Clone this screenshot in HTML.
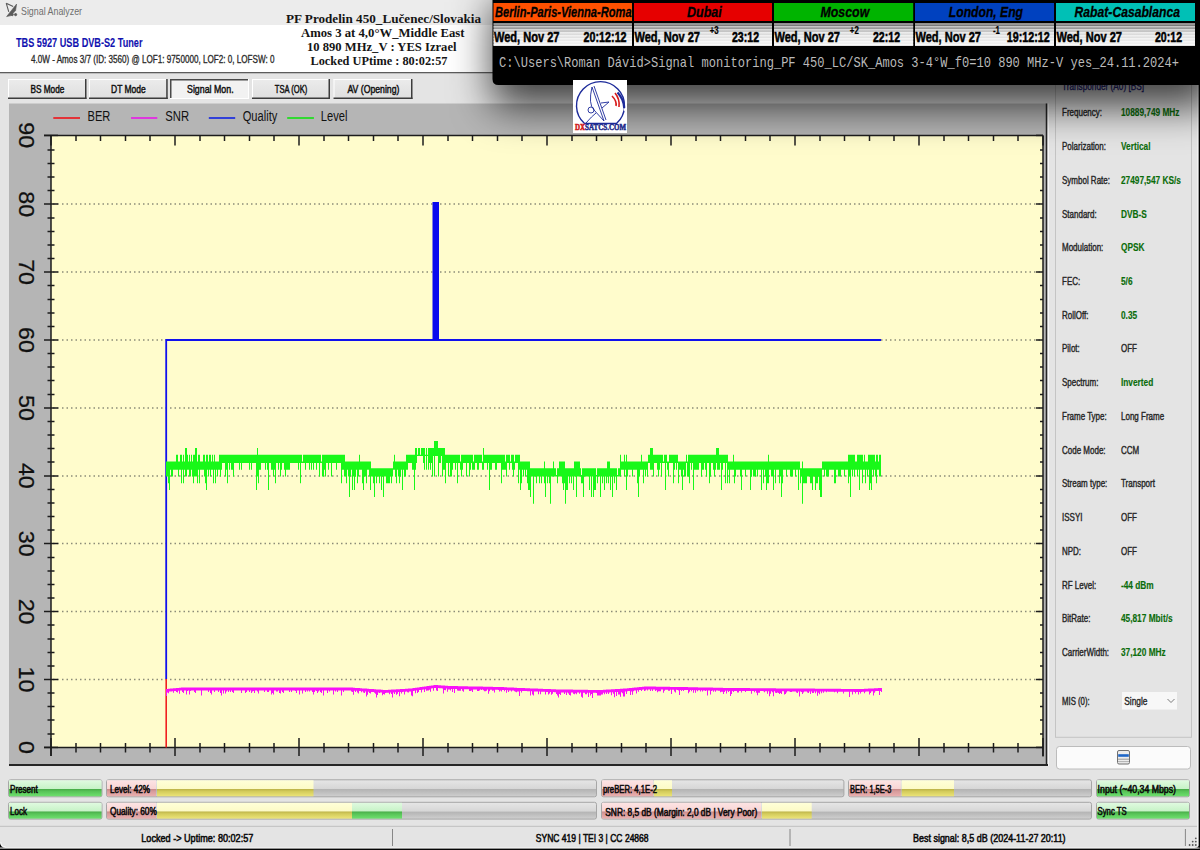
<!DOCTYPE html><html><head><meta charset="utf-8"><title>Signal Analyzer</title><style>html,body{margin:0;padding:0;width:1200px;height:850px;overflow:hidden;background:#e4e4e4}svg{display:block}</style></head><body>
<svg width="1200" height="850" viewBox="0 0 1200 850" shape-rendering="auto">
<defs>
<linearGradient id="gGreen" x1="0" y1="0" x2="0" y2="1">
<stop offset="0" stop-color="#e0fae0"/><stop offset="0.54" stop-color="#c6f2c6"/><stop offset="0.56" stop-color="#48ac48"/><stop offset="0.7" stop-color="#58c458"/><stop offset="1" stop-color="#6ee06e"/></linearGradient>
<linearGradient id="gPink" x1="0" y1="0" x2="0" y2="1">
<stop offset="0" stop-color="#fde4e4"/><stop offset="0.54" stop-color="#f8d4d4"/><stop offset="0.56" stop-color="#c88a8a"/><stop offset="0.7" stop-color="#d89c9c"/><stop offset="1" stop-color="#eab0b0"/></linearGradient>
<linearGradient id="gYel" x1="0" y1="0" x2="0" y2="1">
<stop offset="0" stop-color="#ffffd8"/><stop offset="0.54" stop-color="#fcfac6"/><stop offset="0.56" stop-color="#beb44a"/><stop offset="0.7" stop-color="#d4cc5c"/><stop offset="1" stop-color="#ece478"/></linearGradient>
<linearGradient id="gGray" x1="0" y1="0" x2="0" y2="1">
<stop offset="0" stop-color="#e6e6e6"/><stop offset="0.54" stop-color="#d6d6d6"/><stop offset="0.56" stop-color="#b4b4b4"/><stop offset="0.7" stop-color="#bcbcbc"/><stop offset="1" stop-color="#d0d0d0"/></linearGradient>
<linearGradient id="gDate" x1="0" y1="0" x2="0" y2="1">
<stop offset="0" stop-color="#6a6a6a"/><stop offset="0.18" stop-color="#888888"/><stop offset="0.42" stop-color="#d8d8d8"/><stop offset="1" stop-color="#f4f4f4"/></linearGradient>
<pattern id="pStripe" x="0" y="23" width="4" height="3" patternUnits="userSpaceOnUse"><rect width="4" height="1.5" fill="#ffffff" fill-opacity="0.55"/></pattern>
<linearGradient id="gBtn" x1="0" y1="0" x2="0" y2="1">
<stop offset="0" stop-color="#ececec"/><stop offset="1" stop-color="#dedede"/></linearGradient>
<filter id="fShadow" x="-20%" y="-100%" width="140%" height="300%"><feGaussianBlur stdDeviation="20"/></filter>
</defs>
<rect x="0" y="0" width="1200" height="850" fill="#e4e4e4"/>
<rect x="0" y="0" width="1200" height="25" fill="#ececec"/>
<rect x="0" y="25" width="1200" height="47" fill="#ffffff"/>
<line x1="0" y1="72.5" x2="1200" y2="72.5" stroke="#5c5c5c" stroke-width="1"/>
<line x1="0" y1="73.5" x2="1200" y2="73.5" stroke="#bdbdbd" stroke-width="1"/>
<g fill="#5a5a5a" stroke="#5a5a5a" stroke-linejoin="round"><path d="M6.6 16.6 L16.6 4 L15.6 10.5 L11 15.6 Z" stroke-width="0.6"/><path d="M6.2 3.2 L13.2 6.6 M6.2 3.2 L8.8 11.8" stroke-width="1.1" fill="none"/><circle cx="12.2" cy="14.6" r="1.1"/><circle cx="15.6" cy="14.6" r="1.1"/></g>
<text x="21" y="14.7" font-family="Liberation Sans" font-size="11" font-weight="normal" fill="#6e6e6e" text-anchor="start" textLength="61" lengthAdjust="spacingAndGlyphs">Signal Analyzer</text>
<text x="16" y="47" font-family="Liberation Sans" font-size="12" font-weight="bold" fill="#1212b0" stroke="#1212b0" stroke-width="0.1" text-anchor="start" textLength="126.5" lengthAdjust="spacingAndGlyphs">TBS 5927 USB DVB-S2 Tuner</text>
<text x="31" y="62.5" font-family="Liberation Sans" font-size="10" font-weight="normal" fill="#2a2a2a" stroke="#2a2a2a" stroke-width="0.3" text-anchor="start" textLength="243.5" lengthAdjust="spacingAndGlyphs">4.0W - Amos 3/7 (ID: 3560) @ LOF1: 9750000, LOF2: 0, LOFSW: 0</text>
<text x="286" y="23" font-family="Liberation Serif" font-size="12.5" font-weight="bold" fill="#151515" text-anchor="start" textLength="195" lengthAdjust="spacingAndGlyphs">PF Prodelin 450_Lučenec/Slovakia</text>
<text x="301" y="37" font-family="Liberation Serif" font-size="12.5" font-weight="bold" fill="#151515" text-anchor="start" textLength="163.5" lengthAdjust="spacingAndGlyphs">Amos 3 at 4,0°W_Middle East</text>
<text x="307" y="50.9" font-family="Liberation Serif" font-size="12.5" font-weight="bold" fill="#151515" text-anchor="start" textLength="149.5" lengthAdjust="spacingAndGlyphs">10 890 MHz_V : YES Izrael</text>
<text x="310.5" y="64.5" font-family="Liberation Serif" font-size="12.5" font-weight="bold" fill="#151515" text-anchor="start" textLength="137" lengthAdjust="spacingAndGlyphs">Locked UPtime : 80:02:57</text>
<rect x="8" y="79" width="78.5" height="20" fill="url(#gBtn)"/>
<line x1="8" y1="79.5" x2="86.5" y2="79.5" stroke="#ffffff" stroke-width="1"/>
<line x1="8.5" y1="79" x2="8.5" y2="99" stroke="#ffffff" stroke-width="1"/>
<line x1="8" y1="98.25" x2="86.5" y2="98.25" stroke="#3c3c3c" stroke-width="1.5"/>
<line x1="85.75" y1="79" x2="85.75" y2="99" stroke="#3c3c3c" stroke-width="1.5"/>
<text x="30.4" y="93.1" font-family="Liberation Sans" font-size="10.5" font-weight="normal" fill="#111" stroke="#111" stroke-width="0.45" text-anchor="start" textLength="34" lengthAdjust="spacingAndGlyphs">BS Mode</text>
<rect x="89" y="79" width="78.69999999999999" height="20" fill="url(#gBtn)"/>
<line x1="89" y1="79.5" x2="167.7" y2="79.5" stroke="#ffffff" stroke-width="1"/>
<line x1="89.5" y1="79" x2="89.5" y2="99" stroke="#ffffff" stroke-width="1"/>
<line x1="89" y1="98.25" x2="167.7" y2="98.25" stroke="#3c3c3c" stroke-width="1.5"/>
<line x1="166.95" y1="79" x2="166.95" y2="99" stroke="#3c3c3c" stroke-width="1.5"/>
<text x="111" y="93.1" font-family="Liberation Sans" font-size="10.5" font-weight="normal" fill="#111" stroke="#111" stroke-width="0.45" text-anchor="start" textLength="34.8" lengthAdjust="spacingAndGlyphs">DT Mode</text>
<rect x="170" y="79" width="79" height="20" fill="#f2f2f2"/>
<line x1="170" y1="79.75" x2="249" y2="79.75" stroke="#4a4a4a" stroke-width="1.5"/>
<line x1="170.75" y1="79" x2="170.75" y2="99" stroke="#4a4a4a" stroke-width="1.5"/>
<line x1="170" y1="98.5" x2="249" y2="98.5" stroke="#ffffff" stroke-width="1"/>
<line x1="248.5" y1="79" x2="248.5" y2="99" stroke="#ffffff" stroke-width="1"/>
<text x="187" y="93.1" font-family="Liberation Sans" font-size="10.5" font-weight="normal" fill="#111" stroke="#111" stroke-width="0.45" text-anchor="start" textLength="46.6" lengthAdjust="spacingAndGlyphs">Signal Mon.</text>
<rect x="252" y="79" width="78" height="20" fill="url(#gBtn)"/>
<line x1="252" y1="79.5" x2="330" y2="79.5" stroke="#ffffff" stroke-width="1"/>
<line x1="252.5" y1="79" x2="252.5" y2="99" stroke="#ffffff" stroke-width="1"/>
<line x1="252" y1="98.25" x2="330" y2="98.25" stroke="#3c3c3c" stroke-width="1.5"/>
<line x1="329.25" y1="79" x2="329.25" y2="99" stroke="#3c3c3c" stroke-width="1.5"/>
<text x="274.8" y="93.1" font-family="Liberation Sans" font-size="10.5" font-weight="normal" fill="#111" stroke="#111" stroke-width="0.45" text-anchor="start" textLength="32.5" lengthAdjust="spacingAndGlyphs">TSA (OK)</text>
<rect x="333.5" y="79" width="79.0" height="20" fill="url(#gBtn)"/>
<line x1="333.5" y1="79.5" x2="412.5" y2="79.5" stroke="#ffffff" stroke-width="1"/>
<line x1="334.0" y1="79" x2="334.0" y2="99" stroke="#ffffff" stroke-width="1"/>
<line x1="333.5" y1="98.25" x2="412.5" y2="98.25" stroke="#3c3c3c" stroke-width="1.5"/>
<line x1="411.75" y1="79" x2="411.75" y2="99" stroke="#3c3c3c" stroke-width="1.5"/>
<text x="347.4" y="93.1" font-family="Liberation Sans" font-size="10.5" font-weight="normal" fill="#111" stroke="#111" stroke-width="0.45" text-anchor="start" textLength="52" lengthAdjust="spacingAndGlyphs">AV (Opening)</text>
<rect x="9" y="103.5" width="1038" height="661.5" fill="#b5b5b5"/>
<line x1="9" y1="764.9" x2="1048" y2="764.9" stroke="#262626" stroke-width="2"/>
<line x1="1046.5" y1="103.5" x2="1046.5" y2="766" stroke="#262626" stroke-width="1.5"/>
<line x1="1048.5" y1="103.5" x2="1048.5" y2="766" stroke="#f8f8f8" stroke-width="1"/>
<rect x="51" y="135.4" width="992" height="612.0" fill="#fffccc"/>
<line x1="53" y1="679.5" x2="1041" y2="679.5" stroke="#8c8c78" stroke-width="1.4" stroke-dasharray="1.5 3"/>
<line x1="53" y1="611.5" x2="1041" y2="611.5" stroke="#8c8c78" stroke-width="1.4" stroke-dasharray="1.5 3"/>
<line x1="53" y1="543.5" x2="1041" y2="543.5" stroke="#8c8c78" stroke-width="1.4" stroke-dasharray="1.5 3"/>
<line x1="53" y1="476.0" x2="1041" y2="476.0" stroke="#8c8c78" stroke-width="1.4" stroke-dasharray="1.5 3"/>
<line x1="53" y1="408.0" x2="1041" y2="408.0" stroke="#8c8c78" stroke-width="1.4" stroke-dasharray="1.5 3"/>
<line x1="53" y1="340.0" x2="1041" y2="340.0" stroke="#8c8c78" stroke-width="1.4" stroke-dasharray="1.5 3"/>
<line x1="53" y1="272.0" x2="1041" y2="272.0" stroke="#8c8c78" stroke-width="1.4" stroke-dasharray="1.5 3"/>
<line x1="53" y1="204.0" x2="1041" y2="204.0" stroke="#8c8c78" stroke-width="1.4" stroke-dasharray="1.5 3"/>
<line x1="44" y1="135.4" x2="1043" y2="135.4" stroke="#1c1c1c" stroke-width="1.5"/>
<line x1="44" y1="747.4" x2="1043" y2="747.4" stroke="#1c1c1c" stroke-width="1.5"/>
<line x1="51" y1="135.4" x2="51" y2="756" stroke="#1c1c1c" stroke-width="1.5"/>
<line x1="1043" y1="135.4" x2="1043" y2="756.5" stroke="#1c1c1c" stroke-width="1.5"/>
<line x1="51.0" y1="738" x2="51.0" y2="756" stroke="#1c1c1c" stroke-width="1.5"/>
<line x1="51.0" y1="135.4" x2="51.0" y2="145.5" stroke="#1c1c1c" stroke-width="1.5"/>
<line x1="76.0" y1="743" x2="76.0" y2="752.5" stroke="#1c1c1c" stroke-width="1.5"/>
<line x1="76.0" y1="135.4" x2="76.0" y2="141" stroke="#1c1c1c" stroke-width="1.5"/>
<line x1="100.5" y1="743" x2="100.5" y2="752.5" stroke="#1c1c1c" stroke-width="1.5"/>
<line x1="100.5" y1="135.4" x2="100.5" y2="141" stroke="#1c1c1c" stroke-width="1.5"/>
<line x1="125.5" y1="743" x2="125.5" y2="752.5" stroke="#1c1c1c" stroke-width="1.5"/>
<line x1="125.5" y1="135.4" x2="125.5" y2="141" stroke="#1c1c1c" stroke-width="1.5"/>
<line x1="150.0" y1="743" x2="150.0" y2="752.5" stroke="#1c1c1c" stroke-width="1.5"/>
<line x1="150.0" y1="135.4" x2="150.0" y2="141" stroke="#1c1c1c" stroke-width="1.5"/>
<line x1="175.0" y1="738" x2="175.0" y2="756" stroke="#1c1c1c" stroke-width="1.5"/>
<line x1="175.0" y1="135.4" x2="175.0" y2="145.5" stroke="#1c1c1c" stroke-width="1.5"/>
<line x1="200.0" y1="743" x2="200.0" y2="752.5" stroke="#1c1c1c" stroke-width="1.5"/>
<line x1="200.0" y1="135.4" x2="200.0" y2="141" stroke="#1c1c1c" stroke-width="1.5"/>
<line x1="224.5" y1="743" x2="224.5" y2="752.5" stroke="#1c1c1c" stroke-width="1.5"/>
<line x1="224.5" y1="135.4" x2="224.5" y2="141" stroke="#1c1c1c" stroke-width="1.5"/>
<line x1="249.5" y1="743" x2="249.5" y2="752.5" stroke="#1c1c1c" stroke-width="1.5"/>
<line x1="249.5" y1="135.4" x2="249.5" y2="141" stroke="#1c1c1c" stroke-width="1.5"/>
<line x1="274.0" y1="743" x2="274.0" y2="752.5" stroke="#1c1c1c" stroke-width="1.5"/>
<line x1="274.0" y1="135.4" x2="274.0" y2="141" stroke="#1c1c1c" stroke-width="1.5"/>
<line x1="299.0" y1="738" x2="299.0" y2="756" stroke="#1c1c1c" stroke-width="1.5"/>
<line x1="299.0" y1="135.4" x2="299.0" y2="145.5" stroke="#1c1c1c" stroke-width="1.5"/>
<line x1="324.0" y1="743" x2="324.0" y2="752.5" stroke="#1c1c1c" stroke-width="1.5"/>
<line x1="324.0" y1="135.4" x2="324.0" y2="141" stroke="#1c1c1c" stroke-width="1.5"/>
<line x1="348.5" y1="743" x2="348.5" y2="752.5" stroke="#1c1c1c" stroke-width="1.5"/>
<line x1="348.5" y1="135.4" x2="348.5" y2="141" stroke="#1c1c1c" stroke-width="1.5"/>
<line x1="373.5" y1="743" x2="373.5" y2="752.5" stroke="#1c1c1c" stroke-width="1.5"/>
<line x1="373.5" y1="135.4" x2="373.5" y2="141" stroke="#1c1c1c" stroke-width="1.5"/>
<line x1="398.0" y1="743" x2="398.0" y2="752.5" stroke="#1c1c1c" stroke-width="1.5"/>
<line x1="398.0" y1="135.4" x2="398.0" y2="141" stroke="#1c1c1c" stroke-width="1.5"/>
<line x1="423.0" y1="738" x2="423.0" y2="756" stroke="#1c1c1c" stroke-width="1.5"/>
<line x1="423.0" y1="135.4" x2="423.0" y2="145.5" stroke="#1c1c1c" stroke-width="1.5"/>
<line x1="448.0" y1="743" x2="448.0" y2="752.5" stroke="#1c1c1c" stroke-width="1.5"/>
<line x1="448.0" y1="135.4" x2="448.0" y2="141" stroke="#1c1c1c" stroke-width="1.5"/>
<line x1="472.5" y1="743" x2="472.5" y2="752.5" stroke="#1c1c1c" stroke-width="1.5"/>
<line x1="472.5" y1="135.4" x2="472.5" y2="141" stroke="#1c1c1c" stroke-width="1.5"/>
<line x1="497.5" y1="743" x2="497.5" y2="752.5" stroke="#1c1c1c" stroke-width="1.5"/>
<line x1="497.5" y1="135.4" x2="497.5" y2="141" stroke="#1c1c1c" stroke-width="1.5"/>
<line x1="522.0" y1="743" x2="522.0" y2="752.5" stroke="#1c1c1c" stroke-width="1.5"/>
<line x1="522.0" y1="135.4" x2="522.0" y2="141" stroke="#1c1c1c" stroke-width="1.5"/>
<line x1="547.0" y1="738" x2="547.0" y2="756" stroke="#1c1c1c" stroke-width="1.5"/>
<line x1="547.0" y1="135.4" x2="547.0" y2="145.5" stroke="#1c1c1c" stroke-width="1.5"/>
<line x1="572.0" y1="743" x2="572.0" y2="752.5" stroke="#1c1c1c" stroke-width="1.5"/>
<line x1="572.0" y1="135.4" x2="572.0" y2="141" stroke="#1c1c1c" stroke-width="1.5"/>
<line x1="596.5" y1="743" x2="596.5" y2="752.5" stroke="#1c1c1c" stroke-width="1.5"/>
<line x1="596.5" y1="135.4" x2="596.5" y2="141" stroke="#1c1c1c" stroke-width="1.5"/>
<line x1="621.5" y1="743" x2="621.5" y2="752.5" stroke="#1c1c1c" stroke-width="1.5"/>
<line x1="621.5" y1="135.4" x2="621.5" y2="141" stroke="#1c1c1c" stroke-width="1.5"/>
<line x1="646.0" y1="743" x2="646.0" y2="752.5" stroke="#1c1c1c" stroke-width="1.5"/>
<line x1="646.0" y1="135.4" x2="646.0" y2="141" stroke="#1c1c1c" stroke-width="1.5"/>
<line x1="671.0" y1="738" x2="671.0" y2="756" stroke="#1c1c1c" stroke-width="1.5"/>
<line x1="671.0" y1="135.4" x2="671.0" y2="145.5" stroke="#1c1c1c" stroke-width="1.5"/>
<line x1="696.0" y1="743" x2="696.0" y2="752.5" stroke="#1c1c1c" stroke-width="1.5"/>
<line x1="696.0" y1="135.4" x2="696.0" y2="141" stroke="#1c1c1c" stroke-width="1.5"/>
<line x1="720.5" y1="743" x2="720.5" y2="752.5" stroke="#1c1c1c" stroke-width="1.5"/>
<line x1="720.5" y1="135.4" x2="720.5" y2="141" stroke="#1c1c1c" stroke-width="1.5"/>
<line x1="745.5" y1="743" x2="745.5" y2="752.5" stroke="#1c1c1c" stroke-width="1.5"/>
<line x1="745.5" y1="135.4" x2="745.5" y2="141" stroke="#1c1c1c" stroke-width="1.5"/>
<line x1="770.0" y1="743" x2="770.0" y2="752.5" stroke="#1c1c1c" stroke-width="1.5"/>
<line x1="770.0" y1="135.4" x2="770.0" y2="141" stroke="#1c1c1c" stroke-width="1.5"/>
<line x1="795.0" y1="738" x2="795.0" y2="756" stroke="#1c1c1c" stroke-width="1.5"/>
<line x1="795.0" y1="135.4" x2="795.0" y2="145.5" stroke="#1c1c1c" stroke-width="1.5"/>
<line x1="820.0" y1="743" x2="820.0" y2="752.5" stroke="#1c1c1c" stroke-width="1.5"/>
<line x1="820.0" y1="135.4" x2="820.0" y2="141" stroke="#1c1c1c" stroke-width="1.5"/>
<line x1="844.5" y1="743" x2="844.5" y2="752.5" stroke="#1c1c1c" stroke-width="1.5"/>
<line x1="844.5" y1="135.4" x2="844.5" y2="141" stroke="#1c1c1c" stroke-width="1.5"/>
<line x1="869.5" y1="743" x2="869.5" y2="752.5" stroke="#1c1c1c" stroke-width="1.5"/>
<line x1="869.5" y1="135.4" x2="869.5" y2="141" stroke="#1c1c1c" stroke-width="1.5"/>
<line x1="894.0" y1="743" x2="894.0" y2="752.5" stroke="#1c1c1c" stroke-width="1.5"/>
<line x1="894.0" y1="135.4" x2="894.0" y2="141" stroke="#1c1c1c" stroke-width="1.5"/>
<line x1="919.0" y1="738" x2="919.0" y2="756" stroke="#1c1c1c" stroke-width="1.5"/>
<line x1="919.0" y1="135.4" x2="919.0" y2="145.5" stroke="#1c1c1c" stroke-width="1.5"/>
<line x1="944.0" y1="743" x2="944.0" y2="752.5" stroke="#1c1c1c" stroke-width="1.5"/>
<line x1="944.0" y1="135.4" x2="944.0" y2="141" stroke="#1c1c1c" stroke-width="1.5"/>
<line x1="968.5" y1="743" x2="968.5" y2="752.5" stroke="#1c1c1c" stroke-width="1.5"/>
<line x1="968.5" y1="135.4" x2="968.5" y2="141" stroke="#1c1c1c" stroke-width="1.5"/>
<line x1="993.5" y1="743" x2="993.5" y2="752.5" stroke="#1c1c1c" stroke-width="1.5"/>
<line x1="993.5" y1="135.4" x2="993.5" y2="141" stroke="#1c1c1c" stroke-width="1.5"/>
<line x1="1018.0" y1="743" x2="1018.0" y2="752.5" stroke="#1c1c1c" stroke-width="1.5"/>
<line x1="1018.0" y1="135.4" x2="1018.0" y2="141" stroke="#1c1c1c" stroke-width="1.5"/>
<line x1="1043.0" y1="738" x2="1043.0" y2="756" stroke="#1c1c1c" stroke-width="1.5"/>
<line x1="1043.0" y1="135.4" x2="1043.0" y2="145.5" stroke="#1c1c1c" stroke-width="1.5"/>
<line x1="44" y1="747.4" x2="58" y2="747.4" stroke="#1c1c1c" stroke-width="1.5"/>
<line x1="1036" y1="747.4" x2="1043" y2="747.4" stroke="#1c1c1c" stroke-width="1.5"/>
<line x1="47.5" y1="734.0" x2="54.5" y2="734.0" stroke="#1c1c1c" stroke-width="1.5"/>
<line x1="1040" y1="734.0" x2="1043" y2="734.0" stroke="#1c1c1c" stroke-width="1.5"/>
<line x1="47.5" y1="720.0" x2="54.5" y2="720.0" stroke="#1c1c1c" stroke-width="1.5"/>
<line x1="1040" y1="720.0" x2="1043" y2="720.0" stroke="#1c1c1c" stroke-width="1.5"/>
<line x1="47.5" y1="706.5" x2="54.5" y2="706.5" stroke="#1c1c1c" stroke-width="1.5"/>
<line x1="1040" y1="706.5" x2="1043" y2="706.5" stroke="#1c1c1c" stroke-width="1.5"/>
<line x1="47.5" y1="693.0" x2="54.5" y2="693.0" stroke="#1c1c1c" stroke-width="1.5"/>
<line x1="1040" y1="693.0" x2="1043" y2="693.0" stroke="#1c1c1c" stroke-width="1.5"/>
<line x1="44" y1="679.5" x2="58" y2="679.5" stroke="#1c1c1c" stroke-width="1.5"/>
<line x1="1036" y1="679.5" x2="1043" y2="679.5" stroke="#1c1c1c" stroke-width="1.5"/>
<line x1="47.5" y1="666.0" x2="54.5" y2="666.0" stroke="#1c1c1c" stroke-width="1.5"/>
<line x1="1040" y1="666.0" x2="1043" y2="666.0" stroke="#1c1c1c" stroke-width="1.5"/>
<line x1="47.5" y1="652.5" x2="54.5" y2="652.5" stroke="#1c1c1c" stroke-width="1.5"/>
<line x1="1040" y1="652.5" x2="1043" y2="652.5" stroke="#1c1c1c" stroke-width="1.5"/>
<line x1="47.5" y1="639.0" x2="54.5" y2="639.0" stroke="#1c1c1c" stroke-width="1.5"/>
<line x1="1040" y1="639.0" x2="1043" y2="639.0" stroke="#1c1c1c" stroke-width="1.5"/>
<line x1="47.5" y1="625.0" x2="54.5" y2="625.0" stroke="#1c1c1c" stroke-width="1.5"/>
<line x1="1040" y1="625.0" x2="1043" y2="625.0" stroke="#1c1c1c" stroke-width="1.5"/>
<line x1="44" y1="611.5" x2="58" y2="611.5" stroke="#1c1c1c" stroke-width="1.5"/>
<line x1="1036" y1="611.5" x2="1043" y2="611.5" stroke="#1c1c1c" stroke-width="1.5"/>
<line x1="47.5" y1="598.0" x2="54.5" y2="598.0" stroke="#1c1c1c" stroke-width="1.5"/>
<line x1="1040" y1="598.0" x2="1043" y2="598.0" stroke="#1c1c1c" stroke-width="1.5"/>
<line x1="47.5" y1="584.5" x2="54.5" y2="584.5" stroke="#1c1c1c" stroke-width="1.5"/>
<line x1="1040" y1="584.5" x2="1043" y2="584.5" stroke="#1c1c1c" stroke-width="1.5"/>
<line x1="47.5" y1="571.0" x2="54.5" y2="571.0" stroke="#1c1c1c" stroke-width="1.5"/>
<line x1="1040" y1="571.0" x2="1043" y2="571.0" stroke="#1c1c1c" stroke-width="1.5"/>
<line x1="47.5" y1="557.5" x2="54.5" y2="557.5" stroke="#1c1c1c" stroke-width="1.5"/>
<line x1="1040" y1="557.5" x2="1043" y2="557.5" stroke="#1c1c1c" stroke-width="1.5"/>
<line x1="44" y1="543.5" x2="58" y2="543.5" stroke="#1c1c1c" stroke-width="1.5"/>
<line x1="1036" y1="543.5" x2="1043" y2="543.5" stroke="#1c1c1c" stroke-width="1.5"/>
<line x1="47.5" y1="530.0" x2="54.5" y2="530.0" stroke="#1c1c1c" stroke-width="1.5"/>
<line x1="1040" y1="530.0" x2="1043" y2="530.0" stroke="#1c1c1c" stroke-width="1.5"/>
<line x1="47.5" y1="516.5" x2="54.5" y2="516.5" stroke="#1c1c1c" stroke-width="1.5"/>
<line x1="1040" y1="516.5" x2="1043" y2="516.5" stroke="#1c1c1c" stroke-width="1.5"/>
<line x1="47.5" y1="503.0" x2="54.5" y2="503.0" stroke="#1c1c1c" stroke-width="1.5"/>
<line x1="1040" y1="503.0" x2="1043" y2="503.0" stroke="#1c1c1c" stroke-width="1.5"/>
<line x1="47.5" y1="489.5" x2="54.5" y2="489.5" stroke="#1c1c1c" stroke-width="1.5"/>
<line x1="1040" y1="489.5" x2="1043" y2="489.5" stroke="#1c1c1c" stroke-width="1.5"/>
<line x1="44" y1="476.0" x2="58" y2="476.0" stroke="#1c1c1c" stroke-width="1.5"/>
<line x1="1036" y1="476.0" x2="1043" y2="476.0" stroke="#1c1c1c" stroke-width="1.5"/>
<line x1="47.5" y1="462.0" x2="54.5" y2="462.0" stroke="#1c1c1c" stroke-width="1.5"/>
<line x1="1040" y1="462.0" x2="1043" y2="462.0" stroke="#1c1c1c" stroke-width="1.5"/>
<line x1="47.5" y1="448.5" x2="54.5" y2="448.5" stroke="#1c1c1c" stroke-width="1.5"/>
<line x1="1040" y1="448.5" x2="1043" y2="448.5" stroke="#1c1c1c" stroke-width="1.5"/>
<line x1="47.5" y1="435.0" x2="54.5" y2="435.0" stroke="#1c1c1c" stroke-width="1.5"/>
<line x1="1040" y1="435.0" x2="1043" y2="435.0" stroke="#1c1c1c" stroke-width="1.5"/>
<line x1="47.5" y1="421.5" x2="54.5" y2="421.5" stroke="#1c1c1c" stroke-width="1.5"/>
<line x1="1040" y1="421.5" x2="1043" y2="421.5" stroke="#1c1c1c" stroke-width="1.5"/>
<line x1="44" y1="408.0" x2="58" y2="408.0" stroke="#1c1c1c" stroke-width="1.5"/>
<line x1="1036" y1="408.0" x2="1043" y2="408.0" stroke="#1c1c1c" stroke-width="1.5"/>
<line x1="47.5" y1="394.5" x2="54.5" y2="394.5" stroke="#1c1c1c" stroke-width="1.5"/>
<line x1="1040" y1="394.5" x2="1043" y2="394.5" stroke="#1c1c1c" stroke-width="1.5"/>
<line x1="47.5" y1="380.5" x2="54.5" y2="380.5" stroke="#1c1c1c" stroke-width="1.5"/>
<line x1="1040" y1="380.5" x2="1043" y2="380.5" stroke="#1c1c1c" stroke-width="1.5"/>
<line x1="47.5" y1="367.0" x2="54.5" y2="367.0" stroke="#1c1c1c" stroke-width="1.5"/>
<line x1="1040" y1="367.0" x2="1043" y2="367.0" stroke="#1c1c1c" stroke-width="1.5"/>
<line x1="47.5" y1="353.5" x2="54.5" y2="353.5" stroke="#1c1c1c" stroke-width="1.5"/>
<line x1="1040" y1="353.5" x2="1043" y2="353.5" stroke="#1c1c1c" stroke-width="1.5"/>
<line x1="44" y1="340.0" x2="58" y2="340.0" stroke="#1c1c1c" stroke-width="1.5"/>
<line x1="1036" y1="340.0" x2="1043" y2="340.0" stroke="#1c1c1c" stroke-width="1.5"/>
<line x1="47.5" y1="326.5" x2="54.5" y2="326.5" stroke="#1c1c1c" stroke-width="1.5"/>
<line x1="1040" y1="326.5" x2="1043" y2="326.5" stroke="#1c1c1c" stroke-width="1.5"/>
<line x1="47.5" y1="313.0" x2="54.5" y2="313.0" stroke="#1c1c1c" stroke-width="1.5"/>
<line x1="1040" y1="313.0" x2="1043" y2="313.0" stroke="#1c1c1c" stroke-width="1.5"/>
<line x1="47.5" y1="299.5" x2="54.5" y2="299.5" stroke="#1c1c1c" stroke-width="1.5"/>
<line x1="1040" y1="299.5" x2="1043" y2="299.5" stroke="#1c1c1c" stroke-width="1.5"/>
<line x1="47.5" y1="285.5" x2="54.5" y2="285.5" stroke="#1c1c1c" stroke-width="1.5"/>
<line x1="1040" y1="285.5" x2="1043" y2="285.5" stroke="#1c1c1c" stroke-width="1.5"/>
<line x1="44" y1="272.0" x2="58" y2="272.0" stroke="#1c1c1c" stroke-width="1.5"/>
<line x1="1036" y1="272.0" x2="1043" y2="272.0" stroke="#1c1c1c" stroke-width="1.5"/>
<line x1="47.5" y1="258.5" x2="54.5" y2="258.5" stroke="#1c1c1c" stroke-width="1.5"/>
<line x1="1040" y1="258.5" x2="1043" y2="258.5" stroke="#1c1c1c" stroke-width="1.5"/>
<line x1="47.5" y1="245.0" x2="54.5" y2="245.0" stroke="#1c1c1c" stroke-width="1.5"/>
<line x1="1040" y1="245.0" x2="1043" y2="245.0" stroke="#1c1c1c" stroke-width="1.5"/>
<line x1="47.5" y1="231.5" x2="54.5" y2="231.5" stroke="#1c1c1c" stroke-width="1.5"/>
<line x1="1040" y1="231.5" x2="1043" y2="231.5" stroke="#1c1c1c" stroke-width="1.5"/>
<line x1="47.5" y1="218.0" x2="54.5" y2="218.0" stroke="#1c1c1c" stroke-width="1.5"/>
<line x1="1040" y1="218.0" x2="1043" y2="218.0" stroke="#1c1c1c" stroke-width="1.5"/>
<line x1="44" y1="204.0" x2="58" y2="204.0" stroke="#1c1c1c" stroke-width="1.5"/>
<line x1="1036" y1="204.0" x2="1043" y2="204.0" stroke="#1c1c1c" stroke-width="1.5"/>
<line x1="47.5" y1="190.5" x2="54.5" y2="190.5" stroke="#1c1c1c" stroke-width="1.5"/>
<line x1="1040" y1="190.5" x2="1043" y2="190.5" stroke="#1c1c1c" stroke-width="1.5"/>
<line x1="47.5" y1="177.0" x2="54.5" y2="177.0" stroke="#1c1c1c" stroke-width="1.5"/>
<line x1="1040" y1="177.0" x2="1043" y2="177.0" stroke="#1c1c1c" stroke-width="1.5"/>
<line x1="47.5" y1="163.5" x2="54.5" y2="163.5" stroke="#1c1c1c" stroke-width="1.5"/>
<line x1="1040" y1="163.5" x2="1043" y2="163.5" stroke="#1c1c1c" stroke-width="1.5"/>
<line x1="47.5" y1="150.0" x2="54.5" y2="150.0" stroke="#1c1c1c" stroke-width="1.5"/>
<line x1="1040" y1="150.0" x2="1043" y2="150.0" stroke="#1c1c1c" stroke-width="1.5"/>
<line x1="44" y1="135.4" x2="58" y2="135.4" stroke="#1c1c1c" stroke-width="1.5"/>
<line x1="1036" y1="135.4" x2="1043" y2="135.4" stroke="#1c1c1c" stroke-width="1.5"/>
<text transform="translate(18.6,747.4) rotate(90) scale(1.08,1)" x="0" y="0" font-family="Liberation Sans" font-size="21.5" fill="#101010" stroke="#101010" stroke-width="0.25" text-anchor="middle">0</text>
<text transform="translate(18.6,679.5) rotate(90) scale(1.08,1)" x="0" y="0" font-family="Liberation Sans" font-size="21.5" fill="#101010" stroke="#101010" stroke-width="0.25" text-anchor="middle">10</text>
<text transform="translate(18.6,611.6) rotate(90) scale(1.08,1)" x="0" y="0" font-family="Liberation Sans" font-size="21.5" fill="#101010" stroke="#101010" stroke-width="0.25" text-anchor="middle">20</text>
<text transform="translate(18.6,543.7) rotate(90) scale(1.08,1)" x="0" y="0" font-family="Liberation Sans" font-size="21.5" fill="#101010" stroke="#101010" stroke-width="0.25" text-anchor="middle">30</text>
<text transform="translate(18.6,475.8) rotate(90) scale(1.08,1)" x="0" y="0" font-family="Liberation Sans" font-size="21.5" fill="#101010" stroke="#101010" stroke-width="0.25" text-anchor="middle">40</text>
<text transform="translate(18.6,407.9) rotate(90) scale(1.08,1)" x="0" y="0" font-family="Liberation Sans" font-size="21.5" fill="#101010" stroke="#101010" stroke-width="0.25" text-anchor="middle">50</text>
<text transform="translate(18.6,340.0) rotate(90) scale(1.08,1)" x="0" y="0" font-family="Liberation Sans" font-size="21.5" fill="#101010" stroke="#101010" stroke-width="0.25" text-anchor="middle">60</text>
<text transform="translate(18.6,272.1) rotate(90) scale(1.08,1)" x="0" y="0" font-family="Liberation Sans" font-size="21.5" fill="#101010" stroke="#101010" stroke-width="0.25" text-anchor="middle">70</text>
<text transform="translate(18.6,204.2) rotate(90) scale(1.08,1)" x="0" y="0" font-family="Liberation Sans" font-size="21.5" fill="#101010" stroke="#101010" stroke-width="0.25" text-anchor="middle">80</text>
<text transform="translate(18.6,135.2) rotate(90) scale(1.08,1)" x="0" y="0" font-family="Liberation Sans" font-size="21.5" fill="#101010" stroke="#101010" stroke-width="0.25" text-anchor="middle">90</text>
<line x1="53.3" y1="118" x2="80" y2="118" stroke="#e8242a" stroke-width="1.8"/>
<text x="87.5" y="121.3" font-family="Liberation Sans" font-size="14" font-weight="normal" fill="#111" text-anchor="start" textLength="22.8" lengthAdjust="spacingAndGlyphs">BER</text>
<line x1="131" y1="118" x2="157.3" y2="118" stroke="#e22ae2" stroke-width="1.8"/>
<text x="165.3" y="121.3" font-family="Liberation Sans" font-size="14" font-weight="normal" fill="#111" text-anchor="start" textLength="23.8" lengthAdjust="spacingAndGlyphs">SNR</text>
<line x1="208.8" y1="118" x2="235.2" y2="118" stroke="#2233dd" stroke-width="1.8"/>
<text x="242.7" y="121.3" font-family="Liberation Sans" font-size="14" font-weight="normal" fill="#111" text-anchor="start" textLength="34.6" lengthAdjust="spacingAndGlyphs">Quality</text>
<line x1="287.2" y1="118" x2="313.9" y2="118" stroke="#22dd22" stroke-width="1.8"/>
<text x="320.8" y="121.3" font-family="Liberation Sans" font-size="14" font-weight="normal" fill="#111" text-anchor="start" textLength="26.6" lengthAdjust="spacingAndGlyphs">Level</text>
<line x1="166.2" y1="679" x2="166.2" y2="747.5" stroke="#f02020" stroke-width="1.6"/>
<path d="M166.2 679 L166.2 340 L881 340" stroke="#1010ee" stroke-width="1.8" fill="none"/>
<rect x="432.5" y="202" width="6.5" height="138" fill="#0a0aee"/>
<path d="M166 461.5h1V476.5h-1ZM167 461.5h1V476.5h-1ZM168 461.5h1V483.3h-1ZM169 461.5h1V490.1h-1ZM170 461.5h1V469.7h-1ZM171 461.5h1V476.5h-1ZM172 461.5h1V476.5h-1ZM173 461.5h1V469.7h-1ZM174 461.5h1V469.7h-1ZM175 461.5h1V469.7h-1ZM176 454.7h1V469.7h-1ZM177 454.7h1V469.7h-1ZM178 461.5h1V476.5h-1ZM179 461.5h1V469.7h-1ZM180 454.7h1V469.7h-1ZM181 454.7h1V483.3h-1ZM182 461.5h1V469.7h-1ZM183 454.7h1V483.3h-1ZM184 461.5h1V469.7h-1ZM185 447.9h1V476.5h-1ZM186 447.9h1V476.5h-1ZM187 454.7h1V469.7h-1ZM188 461.5h1V469.7h-1ZM189 454.7h1V476.5h-1ZM190 461.5h1V476.5h-1ZM191 454.7h1V469.7h-1ZM192 461.5h1V476.5h-1ZM193 454.7h1V483.3h-1ZM194 454.7h1V476.5h-1ZM195 447.9h1V476.5h-1ZM196 447.9h1V476.5h-1ZM197 461.5h1V483.3h-1ZM198 454.7h1V469.7h-1ZM199 454.7h1V483.3h-1ZM200 461.5h1V469.7h-1ZM201 461.5h1V469.7h-1ZM202 461.5h1V469.7h-1ZM203 454.7h1V469.7h-1ZM204 454.7h1V476.5h-1ZM205 461.5h1V483.3h-1ZM206 454.7h1V490.1h-1ZM207 454.7h1V469.7h-1ZM208 461.5h1V476.5h-1ZM209 454.7h1V469.7h-1ZM210 454.7h1V476.5h-1ZM211 461.5h1V469.7h-1ZM212 454.7h1V469.7h-1ZM213 461.5h1V483.3h-1ZM214 454.7h1V469.7h-1ZM215 461.5h1V483.3h-1ZM216 461.5h1V469.7h-1ZM217 461.5h1V476.5h-1ZM218 461.5h1V469.7h-1ZM219 454.7h1V469.7h-1ZM220 454.7h1V476.5h-1ZM221 454.7h1V469.7h-1ZM222 454.7h1V462.9h-1ZM223 454.7h1V462.9h-1ZM224 454.7h1V462.9h-1ZM225 454.7h1V476.5h-1ZM226 454.7h1V469.7h-1ZM227 454.7h1V483.3h-1ZM228 454.7h1V462.9h-1ZM229 454.7h1V469.7h-1ZM230 454.7h1V462.9h-1ZM231 454.7h1V469.7h-1ZM232 454.7h1V469.7h-1ZM233 454.7h1V476.5h-1ZM234 454.7h1V462.9h-1ZM235 454.7h1V462.9h-1ZM236 454.7h1V462.9h-1ZM237 454.7h1V462.9h-1ZM238 454.7h1V462.9h-1ZM239 454.7h1V469.7h-1ZM240 454.7h1V462.9h-1ZM241 454.7h1V469.7h-1ZM242 454.7h1V462.9h-1ZM243 454.7h1V462.9h-1ZM244 454.7h1V462.9h-1ZM245 454.7h1V462.9h-1ZM246 454.7h1V462.9h-1ZM247 454.7h1V462.9h-1ZM248 454.7h1V462.9h-1ZM249 454.7h1V469.7h-1ZM250 454.7h1V462.9h-1ZM251 454.7h1V469.7h-1ZM252 454.7h1V462.9h-1ZM253 454.7h1V462.9h-1ZM254 454.7h1V462.9h-1ZM255 454.7h1V462.9h-1ZM256 454.7h1V490.1h-1ZM257 447.9h1V476.5h-1ZM258 454.7h1V483.3h-1ZM259 454.7h1V469.7h-1ZM260 454.7h1V469.7h-1ZM261 454.7h1V462.9h-1ZM262 454.7h1V462.9h-1ZM263 454.7h1V462.9h-1ZM264 454.7h1V462.9h-1ZM265 454.7h1V469.7h-1ZM266 454.7h1V462.9h-1ZM267 454.7h1V469.7h-1ZM268 454.7h1V490.1h-1ZM269 454.7h1V462.9h-1ZM270 454.7h1V462.9h-1ZM271 454.7h1V469.7h-1ZM272 454.7h1V469.7h-1ZM273 454.7h1V476.5h-1ZM274 454.7h1V469.7h-1ZM275 454.7h1V483.3h-1ZM276 454.7h1V462.9h-1ZM277 454.7h1V462.9h-1ZM278 454.7h1V469.7h-1ZM279 454.7h1V462.9h-1ZM280 454.7h1V476.5h-1ZM281 454.7h1V469.7h-1ZM282 454.7h1V462.9h-1ZM283 454.7h1V462.9h-1ZM284 454.7h1V469.7h-1ZM285 454.7h1V476.5h-1ZM286 454.7h1V469.7h-1ZM287 454.7h1V469.7h-1ZM288 454.7h1V469.7h-1ZM289 454.7h1V469.7h-1ZM290 454.7h1V462.9h-1ZM291 454.7h1V462.9h-1ZM292 454.7h1V462.9h-1ZM293 454.7h1V462.9h-1ZM294 454.7h1V462.9h-1ZM295 454.7h1V462.9h-1ZM296 454.7h1V462.9h-1ZM297 454.7h1V462.9h-1ZM298 454.7h1V469.7h-1ZM299 454.7h1V462.9h-1ZM300 454.7h1V483.3h-1ZM301 454.7h1V462.9h-1ZM302 461.5h1V462.9h-1ZM303 454.7h1V462.9h-1ZM304 454.7h1V462.9h-1ZM305 454.7h1V469.7h-1ZM306 454.7h1V462.9h-1ZM307 454.7h1V462.9h-1ZM308 454.7h1V462.9h-1ZM309 454.7h1V469.7h-1ZM310 454.7h1V462.9h-1ZM311 454.7h1V469.7h-1ZM312 454.7h1V462.9h-1ZM313 454.7h1V469.7h-1ZM314 454.7h1V462.9h-1ZM315 454.7h1V462.9h-1ZM316 454.7h1V469.7h-1ZM317 454.7h1V462.9h-1ZM318 454.7h1V462.9h-1ZM319 454.7h1V476.5h-1ZM320 454.7h1V462.9h-1ZM321 461.5h1V462.9h-1ZM322 454.7h1V476.5h-1ZM323 454.7h1V476.5h-1ZM324 454.7h1V469.7h-1ZM325 454.7h1V476.5h-1ZM326 454.7h1V462.9h-1ZM327 454.7h1V462.9h-1ZM328 454.7h1V469.7h-1ZM329 454.7h1V462.9h-1ZM330 454.7h1V462.9h-1ZM331 454.7h1V476.5h-1ZM332 454.7h1V462.9h-1ZM333 454.7h1V462.9h-1ZM334 454.7h1V462.9h-1ZM335 454.7h1V462.9h-1ZM336 454.7h1V469.7h-1ZM337 454.7h1V462.9h-1ZM338 454.7h1V462.9h-1ZM339 454.7h1V462.9h-1ZM340 454.7h1V462.9h-1ZM341 454.7h1V483.3h-1ZM342 454.7h1V469.7h-1ZM343 454.7h1V469.7h-1ZM344 454.7h1V476.5h-1ZM345 461.5h1V476.5h-1ZM346 461.5h1V483.3h-1ZM347 461.5h1V469.7h-1ZM348 461.5h1V476.5h-1ZM349 461.5h1V496.9h-1ZM350 461.5h1V476.5h-1ZM351 461.5h1V469.7h-1ZM352 461.5h1V490.1h-1ZM353 461.5h1V476.5h-1ZM354 461.5h1V490.1h-1ZM355 461.5h1V476.5h-1ZM356 461.5h1V469.7h-1ZM357 461.5h1V483.3h-1ZM358 461.5h1V476.5h-1ZM359 454.7h1V469.7h-1ZM360 461.5h1V469.7h-1ZM361 461.5h1V469.7h-1ZM362 461.5h1V483.3h-1ZM363 461.5h1V490.1h-1ZM364 461.5h1V476.5h-1ZM365 461.5h1V476.5h-1ZM366 461.5h1V483.3h-1ZM367 461.5h1V469.7h-1ZM368 461.5h1V469.7h-1ZM369 461.5h1V476.5h-1ZM370 461.5h1V490.1h-1ZM371 468.3h1V476.5h-1ZM372 468.3h1V476.5h-1ZM373 468.3h1V483.3h-1ZM374 468.3h1V496.9h-1ZM375 468.3h1V476.5h-1ZM376 468.3h1V483.3h-1ZM377 468.3h1V476.5h-1ZM378 468.3h1V476.5h-1ZM379 468.3h1V483.3h-1ZM380 468.3h1V476.5h-1ZM381 468.3h1V490.1h-1ZM382 468.3h1V476.5h-1ZM383 468.3h1V496.9h-1ZM384 468.3h1V476.5h-1ZM385 468.3h1V476.5h-1ZM386 468.3h1V483.3h-1ZM387 468.3h1V483.3h-1ZM388 468.3h1V483.3h-1ZM389 468.3h1V483.3h-1ZM390 468.3h1V476.5h-1ZM391 468.3h1V483.3h-1ZM392 468.3h1V476.5h-1ZM393 461.5h1V469.7h-1ZM394 454.7h1V469.7h-1ZM395 461.5h1V476.5h-1ZM396 461.5h1V483.3h-1ZM397 461.5h1V469.7h-1ZM398 461.5h1V476.5h-1ZM399 461.5h1V483.3h-1ZM400 461.5h1V476.5h-1ZM401 461.5h1V469.7h-1ZM402 461.5h1V490.1h-1ZM403 461.5h1V469.7h-1ZM404 461.5h1V476.5h-1ZM405 461.5h1V476.5h-1ZM406 454.7h1V469.7h-1ZM407 454.7h1V469.7h-1ZM408 454.7h1V462.9h-1ZM409 454.7h1V462.9h-1ZM410 454.7h1V462.9h-1ZM411 454.7h1V462.9h-1ZM412 454.7h1V469.7h-1ZM413 454.7h1V469.7h-1ZM414 454.7h1V490.1h-1ZM415 447.9h1V469.7h-1ZM416 447.9h1V462.9h-1ZM417 454.7h1V456.1h-1ZM418 447.9h1V456.1h-1ZM419 447.9h1V456.1h-1ZM420 454.7h1V456.1h-1ZM421 447.9h1V456.1h-1ZM422 447.9h1V456.1h-1ZM423 447.9h1V462.9h-1ZM424 447.9h1V469.7h-1ZM425 454.7h1V456.1h-1ZM426 447.9h1V469.7h-1ZM427 454.7h1V456.1h-1ZM428 447.9h1V469.7h-1ZM429 447.9h1V462.9h-1ZM430 447.9h1V469.7h-1ZM431 447.9h1V462.9h-1ZM432 447.9h1V476.5h-1ZM433 447.9h1V456.1h-1ZM434 441.1h1V476.5h-1ZM435 441.1h1V456.1h-1ZM436 441.1h1V456.1h-1ZM437 441.1h1V456.1h-1ZM438 447.9h1V476.5h-1ZM439 447.9h1V462.9h-1ZM440 447.9h1V462.9h-1ZM441 447.9h1V456.1h-1ZM442 447.9h1V476.5h-1ZM443 447.9h1V469.7h-1ZM444 447.9h1V469.7h-1ZM445 454.7h1V483.3h-1ZM446 454.7h1V462.9h-1ZM447 454.7h1V462.9h-1ZM448 454.7h1V476.5h-1ZM449 454.7h1V462.9h-1ZM450 454.7h1V476.5h-1ZM451 454.7h1V476.5h-1ZM452 454.7h1V469.7h-1ZM453 454.7h1V462.9h-1ZM454 454.7h1V462.9h-1ZM455 454.7h1V469.7h-1ZM456 454.7h1V462.9h-1ZM457 454.7h1V483.3h-1ZM458 454.7h1V462.9h-1ZM459 454.7h1V462.9h-1ZM460 461.5h1V469.7h-1ZM461 454.7h1V476.5h-1ZM462 454.7h1V469.7h-1ZM463 454.7h1V462.9h-1ZM464 454.7h1V462.9h-1ZM465 454.7h1V462.9h-1ZM466 454.7h1V476.5h-1ZM467 454.7h1V462.9h-1ZM468 454.7h1V462.9h-1ZM469 454.7h1V476.5h-1ZM470 454.7h1V469.7h-1ZM471 454.7h1V462.9h-1ZM472 454.7h1V469.7h-1ZM473 461.5h1V469.7h-1ZM474 454.7h1V469.7h-1ZM475 454.7h1V462.9h-1ZM476 454.7h1V462.9h-1ZM477 454.7h1V469.7h-1ZM478 454.7h1V469.7h-1ZM479 454.7h1V462.9h-1ZM480 454.7h1V462.9h-1ZM481 454.7h1V462.9h-1ZM482 461.5h1V469.7h-1ZM483 447.9h1V469.7h-1ZM484 454.7h1V462.9h-1ZM485 454.7h1V462.9h-1ZM486 454.7h1V462.9h-1ZM487 454.7h1V469.7h-1ZM488 454.7h1V462.9h-1ZM489 454.7h1V490.1h-1ZM490 454.7h1V469.7h-1ZM491 454.7h1V469.7h-1ZM492 454.7h1V462.9h-1ZM493 454.7h1V462.9h-1ZM494 454.7h1V462.9h-1ZM495 454.7h1V469.7h-1ZM496 454.7h1V469.7h-1ZM497 454.7h1V462.9h-1ZM498 454.7h1V462.9h-1ZM499 454.7h1V462.9h-1ZM500 454.7h1V462.9h-1ZM501 454.7h1V483.3h-1ZM502 454.7h1V469.7h-1ZM503 454.7h1V469.7h-1ZM504 454.7h1V469.7h-1ZM505 461.5h1V469.7h-1ZM506 454.7h1V476.5h-1ZM507 454.7h1V462.9h-1ZM508 454.7h1V462.9h-1ZM509 454.7h1V469.7h-1ZM510 461.5h1V462.9h-1ZM511 454.7h1V462.9h-1ZM512 454.7h1V469.7h-1ZM513 454.7h1V476.5h-1ZM514 461.5h1V469.7h-1ZM515 454.7h1V462.9h-1ZM516 454.7h1V462.9h-1ZM517 454.7h1V462.9h-1ZM518 454.7h1V483.3h-1ZM519 454.7h1V469.7h-1ZM520 461.5h1V490.1h-1ZM521 461.5h1V483.3h-1ZM522 461.5h1V469.7h-1ZM523 461.5h1V476.5h-1ZM524 461.5h1V469.7h-1ZM525 461.5h1V476.5h-1ZM526 461.5h1V469.7h-1ZM527 461.5h1V483.3h-1ZM528 461.5h1V490.1h-1ZM529 461.5h1V490.1h-1ZM530 468.3h1V496.9h-1ZM531 468.3h1V476.5h-1ZM532 468.3h1V476.5h-1ZM533 468.3h1V503.7h-1ZM534 468.3h1V476.5h-1ZM535 468.3h1V476.5h-1ZM536 468.3h1V483.3h-1ZM537 468.3h1V476.5h-1ZM538 468.3h1V476.5h-1ZM539 468.3h1V483.3h-1ZM540 468.3h1V476.5h-1ZM541 468.3h1V483.3h-1ZM542 468.3h1V476.5h-1ZM543 468.3h1V476.5h-1ZM544 461.5h1V483.3h-1ZM545 468.3h1V496.9h-1ZM546 468.3h1V476.5h-1ZM547 468.3h1V483.3h-1ZM548 468.3h1V476.5h-1ZM549 468.3h1V483.3h-1ZM550 468.3h1V503.7h-1ZM551 468.3h1V476.5h-1ZM552 468.3h1V476.5h-1ZM553 461.5h1V476.5h-1ZM554 468.3h1V476.5h-1ZM555 468.3h1V476.5h-1ZM556 475.1h1V476.5h-1ZM557 468.3h1V483.3h-1ZM558 468.3h1V476.5h-1ZM559 461.5h1V476.5h-1ZM560 461.5h1V476.5h-1ZM561 461.5h1V476.5h-1ZM562 461.5h1V483.3h-1ZM563 461.5h1V490.1h-1ZM564 461.5h1V483.3h-1ZM565 468.3h1V503.7h-1ZM566 468.3h1V490.1h-1ZM567 468.3h1V490.1h-1ZM568 468.3h1V476.5h-1ZM569 468.3h1V483.3h-1ZM570 468.3h1V476.5h-1ZM571 468.3h1V483.3h-1ZM572 468.3h1V476.5h-1ZM573 468.3h1V490.1h-1ZM574 461.5h1V476.5h-1ZM575 461.5h1V476.5h-1ZM576 461.5h1V496.9h-1ZM577 461.5h1V476.5h-1ZM578 461.5h1V476.5h-1ZM579 461.5h1V476.5h-1ZM580 468.3h1V476.5h-1ZM581 475.1h1V483.3h-1ZM582 468.3h1V483.3h-1ZM583 468.3h1V496.9h-1ZM584 468.3h1V476.5h-1ZM585 468.3h1V476.5h-1ZM586 468.3h1V476.5h-1ZM587 468.3h1V476.5h-1ZM588 468.3h1V476.5h-1ZM589 468.3h1V490.1h-1ZM590 468.3h1V476.5h-1ZM591 468.3h1V496.9h-1ZM592 468.3h1V476.5h-1ZM593 468.3h1V496.9h-1ZM594 468.3h1V490.1h-1ZM595 468.3h1V490.1h-1ZM596 475.1h1V476.5h-1ZM597 468.3h1V483.3h-1ZM598 468.3h1V476.5h-1ZM599 468.3h1V476.5h-1ZM600 468.3h1V496.9h-1ZM601 468.3h1V476.5h-1ZM602 468.3h1V483.3h-1ZM603 468.3h1V476.5h-1ZM604 468.3h1V490.1h-1ZM605 468.3h1V476.5h-1ZM606 468.3h1V483.3h-1ZM607 461.5h1V476.5h-1ZM608 461.5h1V483.3h-1ZM609 461.5h1V476.5h-1ZM610 468.3h1V490.1h-1ZM611 468.3h1V476.5h-1ZM612 468.3h1V496.9h-1ZM613 468.3h1V476.5h-1ZM614 468.3h1V483.3h-1ZM615 468.3h1V476.5h-1ZM616 468.3h1V490.1h-1ZM617 475.1h1V476.5h-1ZM618 468.3h1V476.5h-1ZM619 468.3h1V476.5h-1ZM620 454.7h1V476.5h-1ZM621 461.5h1V469.7h-1ZM622 461.5h1V469.7h-1ZM623 461.5h1V469.7h-1ZM624 454.7h1V476.5h-1ZM625 461.5h1V469.7h-1ZM626 454.7h1V490.1h-1ZM627 461.5h1V476.5h-1ZM628 461.5h1V469.7h-1ZM629 461.5h1V469.7h-1ZM630 461.5h1V469.7h-1ZM631 461.5h1V469.7h-1ZM632 461.5h1V476.5h-1ZM633 461.5h1V469.7h-1ZM634 461.5h1V469.7h-1ZM635 461.5h1V469.7h-1ZM636 461.5h1V469.7h-1ZM637 461.5h1V483.3h-1ZM638 461.5h1V496.9h-1ZM639 461.5h1V476.5h-1ZM640 461.5h1V469.7h-1ZM641 454.7h1V469.7h-1ZM642 461.5h1V469.7h-1ZM643 461.5h1V483.3h-1ZM644 461.5h1V469.7h-1ZM645 461.5h1V476.5h-1ZM646 461.5h1V469.7h-1ZM647 461.5h1V476.5h-1ZM648 454.7h1V462.9h-1ZM649 454.7h1V462.9h-1ZM650 447.9h1V469.7h-1ZM651 447.9h1V469.7h-1ZM652 447.9h1V469.7h-1ZM653 454.7h1V476.5h-1ZM654 454.7h1V462.9h-1ZM655 454.7h1V462.9h-1ZM656 454.7h1V462.9h-1ZM657 454.7h1V469.7h-1ZM658 454.7h1V476.5h-1ZM659 454.7h1V469.7h-1ZM660 454.7h1V462.9h-1ZM661 454.7h1V476.5h-1ZM662 454.7h1V462.9h-1ZM663 461.5h1V462.9h-1ZM664 454.7h1V462.9h-1ZM665 454.7h1V490.1h-1ZM666 454.7h1V462.9h-1ZM667 461.5h1V469.7h-1ZM668 461.5h1V476.5h-1ZM669 454.7h1V462.9h-1ZM670 454.7h1V462.9h-1ZM671 454.7h1V462.9h-1ZM672 454.7h1V462.9h-1ZM673 454.7h1V483.3h-1ZM674 454.7h1V469.7h-1ZM675 454.7h1V462.9h-1ZM676 454.7h1V469.7h-1ZM677 454.7h1V462.9h-1ZM678 461.5h1V483.3h-1ZM679 461.5h1V469.7h-1ZM680 461.5h1V469.7h-1ZM681 461.5h1V476.5h-1ZM682 461.5h1V490.1h-1ZM683 461.5h1V469.7h-1ZM684 461.5h1V476.5h-1ZM685 461.5h1V476.5h-1ZM686 454.7h1V462.9h-1ZM687 461.5h1V476.5h-1ZM688 454.7h1V476.5h-1ZM689 454.7h1V483.3h-1ZM690 454.7h1V462.9h-1ZM691 454.7h1V469.7h-1ZM692 454.7h1V462.9h-1ZM693 454.7h1V490.1h-1ZM694 454.7h1V469.7h-1ZM695 454.7h1V469.7h-1ZM696 454.7h1V469.7h-1ZM697 454.7h1V469.7h-1ZM698 454.7h1V469.7h-1ZM699 454.7h1V462.9h-1ZM700 454.7h1V462.9h-1ZM701 454.7h1V476.5h-1ZM702 454.7h1V469.7h-1ZM703 454.7h1V469.7h-1ZM704 454.7h1V462.9h-1ZM705 454.7h1V469.7h-1ZM706 454.7h1V476.5h-1ZM707 454.7h1V462.9h-1ZM708 454.7h1V462.9h-1ZM709 454.7h1V483.3h-1ZM710 454.7h1V476.5h-1ZM711 454.7h1V462.9h-1ZM712 454.7h1V462.9h-1ZM713 454.7h1V469.7h-1ZM714 454.7h1V476.5h-1ZM715 454.7h1V469.7h-1ZM716 447.9h1V462.9h-1ZM717 447.9h1V469.7h-1ZM718 447.9h1V469.7h-1ZM719 454.7h1V469.7h-1ZM720 454.7h1V462.9h-1ZM721 454.7h1V490.1h-1ZM722 454.7h1V469.7h-1ZM723 454.7h1V462.9h-1ZM724 454.7h1V462.9h-1ZM725 454.7h1V483.3h-1ZM726 454.7h1V462.9h-1ZM727 454.7h1V483.3h-1ZM728 461.5h1V469.7h-1ZM729 461.5h1V483.3h-1ZM730 461.5h1V469.7h-1ZM731 461.5h1V469.7h-1ZM732 461.5h1V469.7h-1ZM733 454.7h1V469.7h-1ZM734 461.5h1V483.3h-1ZM735 461.5h1V476.5h-1ZM736 461.5h1V469.7h-1ZM737 461.5h1V469.7h-1ZM738 461.5h1V469.7h-1ZM739 461.5h1V469.7h-1ZM740 461.5h1V476.5h-1ZM741 461.5h1V490.1h-1ZM742 461.5h1V469.7h-1ZM743 461.5h1V469.7h-1ZM744 461.5h1V469.7h-1ZM745 461.5h1V476.5h-1ZM746 461.5h1V469.7h-1ZM747 461.5h1V469.7h-1ZM748 461.5h1V469.7h-1ZM749 461.5h1V469.7h-1ZM750 461.5h1V490.1h-1ZM751 461.5h1V476.5h-1ZM752 461.5h1V469.7h-1ZM753 461.5h1V476.5h-1ZM754 461.5h1V476.5h-1ZM755 461.5h1V476.5h-1ZM756 461.5h1V469.7h-1ZM757 461.5h1V476.5h-1ZM758 461.5h1V469.7h-1ZM759 461.5h1V469.7h-1ZM760 461.5h1V469.7h-1ZM761 461.5h1V490.1h-1ZM762 461.5h1V469.7h-1ZM763 461.5h1V483.3h-1ZM764 461.5h1V469.7h-1ZM765 461.5h1V476.5h-1ZM766 461.5h1V490.1h-1ZM767 461.5h1V483.3h-1ZM768 454.7h1V483.3h-1ZM769 461.5h1V469.7h-1ZM770 461.5h1V469.7h-1ZM771 461.5h1V476.5h-1ZM772 461.5h1V476.5h-1ZM773 461.5h1V490.1h-1ZM774 461.5h1V469.7h-1ZM775 461.5h1V483.3h-1ZM776 461.5h1V469.7h-1ZM777 461.5h1V469.7h-1ZM778 461.5h1V469.7h-1ZM779 461.5h1V483.3h-1ZM780 461.5h1V476.5h-1ZM781 461.5h1V496.9h-1ZM782 461.5h1V483.3h-1ZM783 461.5h1V469.7h-1ZM784 461.5h1V469.7h-1ZM785 461.5h1V469.7h-1ZM786 461.5h1V476.5h-1ZM787 461.5h1V469.7h-1ZM788 461.5h1V469.7h-1ZM789 461.5h1V469.7h-1ZM790 461.5h1V476.5h-1ZM791 461.5h1V476.5h-1ZM792 461.5h1V476.5h-1ZM793 461.5h1V469.7h-1ZM794 461.5h1V469.7h-1ZM795 461.5h1V476.5h-1ZM796 461.5h1V469.7h-1ZM797 461.5h1V469.7h-1ZM798 461.5h1V490.1h-1ZM799 461.5h1V469.7h-1ZM800 468.3h1V483.3h-1ZM801 468.3h1V476.5h-1ZM802 461.5h1V503.7h-1ZM803 468.3h1V483.3h-1ZM804 468.3h1V483.3h-1ZM805 468.3h1V483.3h-1ZM806 468.3h1V483.3h-1ZM807 468.3h1V476.5h-1ZM808 468.3h1V476.5h-1ZM809 468.3h1V476.5h-1ZM810 468.3h1V483.3h-1ZM811 468.3h1V483.3h-1ZM812 468.3h1V490.1h-1ZM813 468.3h1V476.5h-1ZM814 468.3h1V476.5h-1ZM815 468.3h1V490.1h-1ZM816 468.3h1V483.3h-1ZM817 468.3h1V483.3h-1ZM818 468.3h1V476.5h-1ZM819 468.3h1V490.1h-1ZM820 468.3h1V496.9h-1ZM821 468.3h1V496.9h-1ZM822 461.5h1V469.7h-1ZM823 461.5h1V469.7h-1ZM824 461.5h1V476.5h-1ZM825 461.5h1V469.7h-1ZM826 461.5h1V476.5h-1ZM827 461.5h1V476.5h-1ZM828 461.5h1V476.5h-1ZM829 461.5h1V469.7h-1ZM830 461.5h1V469.7h-1ZM831 461.5h1V469.7h-1ZM832 461.5h1V469.7h-1ZM833 461.5h1V469.7h-1ZM834 461.5h1V483.3h-1ZM835 461.5h1V483.3h-1ZM836 461.5h1V469.7h-1ZM837 461.5h1V469.7h-1ZM838 461.5h1V476.5h-1ZM839 461.5h1V476.5h-1ZM840 461.5h1V476.5h-1ZM841 461.5h1V469.7h-1ZM842 461.5h1V469.7h-1ZM843 461.5h1V469.7h-1ZM844 461.5h1V476.5h-1ZM845 461.5h1V469.7h-1ZM846 461.5h1V469.7h-1ZM847 461.5h1V469.7h-1ZM848 454.7h1V483.3h-1ZM849 454.7h1V476.5h-1ZM850 454.7h1V496.9h-1ZM851 454.7h1V469.7h-1ZM852 454.7h1V476.5h-1ZM853 454.7h1V469.7h-1ZM854 454.7h1V476.5h-1ZM855 461.5h1V469.7h-1ZM856 461.5h1V469.7h-1ZM857 454.7h1V476.5h-1ZM858 454.7h1V469.7h-1ZM859 454.7h1V490.1h-1ZM860 454.7h1V469.7h-1ZM861 454.7h1V469.7h-1ZM862 454.7h1V483.3h-1ZM863 461.5h1V469.7h-1ZM864 454.7h1V469.7h-1ZM865 461.5h1V483.3h-1ZM866 461.5h1V469.7h-1ZM867 461.5h1V476.5h-1ZM868 454.7h1V469.7h-1ZM869 454.7h1V490.1h-1ZM870 454.7h1V483.3h-1ZM871 454.7h1V490.1h-1ZM872 454.7h1V469.7h-1ZM873 454.7h1V476.5h-1ZM874 454.7h1V469.7h-1ZM875 461.5h1V476.5h-1ZM876 454.7h1V483.3h-1ZM877 454.7h1V469.7h-1ZM878 461.5h1V469.7h-1ZM879 454.7h1V476.5h-1ZM880 454.7h1V476.5h-1Z" fill="#18f818" stroke="none"/>
<path d="M166 689.0h1V696.0h-1ZM167 688.9h1V692.4h-1ZM168 688.8h1V693.3h-1ZM169 688.7h1V691.6h-1ZM170 688.6h1V691.5h-1ZM171 688.5h1V691.4h-1ZM172 688.4h1V691.3h-1ZM173 688.3h1V692.8h-1ZM174 688.2h1V691.1h-1ZM175 688.2h1V691.1h-1ZM176 688.1h1V692.1h-1ZM177 688.0h1V692.5h-1ZM178 687.9h1V690.8h-1ZM179 687.8h1V693.8h-1ZM180 687.7h1V690.6h-1ZM181 687.6h1V690.5h-1ZM182 687.5h1V692.0h-1ZM183 687.5h1V693.0h-1ZM184 687.5h1V690.4h-1ZM185 687.5h1V690.4h-1ZM186 687.5h1V694.5h-1ZM187 687.5h1V691.0h-1ZM188 687.5h1V690.4h-1ZM189 687.5h1V694.5h-1ZM190 687.5h1V691.0h-1ZM191 687.5h1V690.4h-1ZM192 687.5h1V690.4h-1ZM193 687.5h1V690.4h-1ZM194 687.5h1V692.0h-1ZM195 687.5h1V693.0h-1ZM196 687.5h1V690.4h-1ZM197 687.5h1V690.4h-1ZM198 687.5h1V690.4h-1ZM199 687.5h1V690.4h-1ZM200 687.5h1V690.4h-1ZM201 687.5h1V695.5h-1ZM202 687.5h1V690.4h-1ZM203 687.5h1V690.4h-1ZM204 687.5h1V690.4h-1ZM205 687.5h1V690.4h-1ZM206 687.5h1V690.4h-1ZM207 687.5h1V690.4h-1ZM208 687.5h1V692.0h-1ZM209 687.5h1V690.4h-1ZM210 687.5h1V693.0h-1ZM211 687.5h1V694.5h-1ZM212 687.5h1V690.4h-1ZM213 687.5h1V690.4h-1ZM214 687.5h1V692.0h-1ZM215 687.5h1V690.4h-1ZM216 687.5h1V690.4h-1ZM217 687.5h1V690.4h-1ZM218 687.5h1V692.0h-1ZM219 687.5h1V690.4h-1ZM220 687.5h1V693.0h-1ZM221 687.5h1V695.5h-1ZM222 687.5h1V690.4h-1ZM223 687.5h1V693.5h-1ZM224 687.5h1V690.4h-1ZM225 687.5h1V693.5h-1ZM226 687.5h1V691.5h-1ZM227 687.5h1V690.4h-1ZM228 687.5h1V692.0h-1ZM229 687.5h1V690.4h-1ZM230 687.5h1V692.0h-1ZM231 687.5h1V690.4h-1ZM232 687.5h1V692.0h-1ZM233 687.5h1V693.0h-1ZM234 687.5h1V690.4h-1ZM235 687.5h1V690.4h-1ZM236 687.5h1V690.4h-1ZM237 687.5h1V690.4h-1ZM238 687.5h1V690.4h-1ZM239 687.5h1V690.4h-1ZM240 687.5h1V690.4h-1ZM241 687.5h1V693.0h-1ZM242 687.5h1V690.4h-1ZM243 687.5h1V690.4h-1ZM244 687.5h1V690.4h-1ZM245 687.5h1V693.0h-1ZM246 687.5h1V692.0h-1ZM247 687.5h1V690.4h-1ZM248 687.5h1V690.4h-1ZM249 687.5h1V692.0h-1ZM250 687.5h1V690.4h-1ZM251 687.5h1V693.0h-1ZM252 687.5h1V691.5h-1ZM253 687.5h1V691.0h-1ZM254 687.5h1V693.0h-1ZM255 687.5h1V690.4h-1ZM256 687.5h1V690.4h-1ZM257 687.5h1V691.5h-1ZM258 687.5h1V693.5h-1ZM259 687.5h1V690.4h-1ZM260 687.5h1V690.4h-1ZM261 687.5h1V690.4h-1ZM262 687.5h1V690.4h-1ZM263 687.5h1V690.4h-1ZM264 687.5h1V692.0h-1ZM265 687.5h1V690.4h-1ZM266 687.5h1V690.4h-1ZM267 687.5h1V692.0h-1ZM268 687.5h1V692.0h-1ZM269 687.5h1V690.4h-1ZM270 687.5h1V690.4h-1ZM271 687.5h1V694.5h-1ZM272 687.5h1V693.0h-1ZM273 687.5h1V694.5h-1ZM274 687.5h1V690.4h-1ZM275 687.5h1V690.4h-1ZM276 687.5h1V691.5h-1ZM277 687.5h1V691.5h-1ZM278 687.5h1V690.4h-1ZM279 687.5h1V693.0h-1ZM280 687.5h1V693.5h-1ZM281 687.5h1V690.4h-1ZM282 687.5h1V692.0h-1ZM283 687.5h1V693.0h-1ZM284 687.5h1V690.4h-1ZM285 687.5h1V690.4h-1ZM286 687.5h1V690.4h-1ZM287 687.5h1V690.4h-1ZM288 687.5h1V690.4h-1ZM289 687.5h1V692.0h-1ZM290 687.5h1V690.4h-1ZM291 687.5h1V692.0h-1ZM292 687.5h1V690.4h-1ZM293 687.5h1V690.4h-1ZM294 687.5h1V690.4h-1ZM295 687.5h1V691.0h-1ZM296 687.5h1V693.0h-1ZM297 687.5h1V690.4h-1ZM298 687.5h1V690.4h-1ZM299 687.5h1V694.5h-1ZM300 687.5h1V690.4h-1ZM301 687.5h1V690.4h-1ZM302 687.5h1V693.5h-1ZM303 687.5h1V690.4h-1ZM304 687.5h1V690.4h-1ZM305 687.5h1V692.0h-1ZM306 687.5h1V690.4h-1ZM307 687.5h1V691.5h-1ZM308 687.5h1V690.4h-1ZM309 687.5h1V691.5h-1ZM310 687.5h1V690.4h-1ZM311 687.5h1V690.4h-1ZM312 687.5h1V692.0h-1ZM313 687.5h1V694.5h-1ZM314 687.5h1V692.0h-1ZM315 687.5h1V690.4h-1ZM316 687.5h1V691.0h-1ZM317 687.5h1V693.0h-1ZM318 687.5h1V691.5h-1ZM319 687.5h1V690.4h-1ZM320 687.5h1V692.0h-1ZM321 687.5h1V693.0h-1ZM322 687.5h1V690.4h-1ZM323 687.5h1V695.5h-1ZM324 687.5h1V690.4h-1ZM325 687.5h1V690.4h-1ZM326 687.5h1V690.4h-1ZM327 687.5h1V693.0h-1ZM328 687.5h1V690.4h-1ZM329 687.5h1V691.5h-1ZM330 687.5h1V690.4h-1ZM331 687.5h1V690.4h-1ZM332 687.5h1V690.4h-1ZM333 687.5h1V694.5h-1ZM334 687.5h1V690.4h-1ZM335 687.5h1V691.5h-1ZM336 687.5h1V690.4h-1ZM337 687.5h1V692.0h-1ZM338 687.5h1V690.4h-1ZM339 687.5h1V690.4h-1ZM340 687.5h1V690.4h-1ZM341 687.5h1V695.5h-1ZM342 687.5h1V690.4h-1ZM343 687.5h1V692.0h-1ZM344 687.5h1V690.4h-1ZM345 687.5h1V690.4h-1ZM346 687.5h1V690.4h-1ZM347 687.5h1V690.4h-1ZM348 687.5h1V690.4h-1ZM349 687.5h1V690.4h-1ZM350 687.5h1V690.4h-1ZM351 687.6h1V691.6h-1ZM352 687.6h1V692.1h-1ZM353 687.7h1V694.7h-1ZM354 687.8h1V690.7h-1ZM355 687.9h1V691.9h-1ZM356 687.9h1V690.8h-1ZM357 688.0h1V692.5h-1ZM358 688.1h1V693.6h-1ZM359 688.1h1V691.0h-1ZM360 688.2h1V691.1h-1ZM361 688.3h1V692.3h-1ZM362 688.4h1V691.3h-1ZM363 688.4h1V692.4h-1ZM364 688.5h1V693.0h-1ZM365 688.6h1V691.5h-1ZM366 688.6h1V696.6h-1ZM367 688.7h1V694.7h-1ZM368 688.8h1V691.7h-1ZM369 688.9h1V692.9h-1ZM370 688.9h1V693.4h-1ZM371 689.0h1V691.9h-1ZM372 689.1h1V692.0h-1ZM373 689.1h1V692.0h-1ZM374 689.2h1V692.7h-1ZM375 689.3h1V693.8h-1ZM376 689.4h1V697.4h-1ZM377 689.4h1V694.9h-1ZM378 689.5h1V692.4h-1ZM379 689.6h1V693.1h-1ZM380 689.6h1V692.5h-1ZM381 689.7h1V692.6h-1ZM382 689.8h1V695.3h-1ZM383 689.9h1V693.9h-1ZM384 689.9h1V694.4h-1ZM385 690.0h1V692.9h-1ZM386 689.9h1V692.8h-1ZM387 689.9h1V692.8h-1ZM388 689.8h1V692.7h-1ZM389 689.8h1V694.3h-1ZM390 689.7h1V692.6h-1ZM391 689.6h1V694.1h-1ZM392 689.6h1V697.6h-1ZM393 689.5h1V692.4h-1ZM394 689.5h1V694.0h-1ZM395 689.4h1V692.3h-1ZM396 689.3h1V694.8h-1ZM397 689.3h1V693.8h-1ZM398 689.2h1V692.1h-1ZM399 689.2h1V696.2h-1ZM400 689.1h1V692.0h-1ZM401 689.0h1V693.5h-1ZM402 689.0h1V691.9h-1ZM403 688.9h1V691.8h-1ZM404 688.9h1V694.4h-1ZM405 688.8h1V691.7h-1ZM406 688.7h1V691.6h-1ZM407 688.7h1V692.2h-1ZM408 688.6h1V692.6h-1ZM409 688.6h1V691.5h-1ZM410 688.5h1V691.4h-1ZM411 688.4h1V695.4h-1ZM412 688.2h1V696.2h-1ZM413 688.1h1V691.0h-1ZM414 687.9h1V690.8h-1ZM415 687.8h1V693.3h-1ZM416 687.7h1V690.6h-1ZM417 687.5h1V693.0h-1ZM418 687.4h1V691.9h-1ZM419 687.2h1V690.1h-1ZM420 687.1h1V690.0h-1ZM421 687.0h1V692.5h-1ZM422 686.8h1V689.7h-1ZM423 686.7h1V689.6h-1ZM424 686.5h1V692.0h-1ZM425 686.4h1V689.3h-1ZM426 686.3h1V690.8h-1ZM427 686.1h1V690.6h-1ZM428 686.0h1V690.5h-1ZM429 685.8h1V689.8h-1ZM430 685.7h1V691.7h-1ZM431 685.6h1V688.5h-1ZM432 685.4h1V688.3h-1ZM433 685.3h1V690.8h-1ZM434 685.1h1V688.0h-1ZM435 685.0h1V687.9h-1ZM436 685.1h1V690.6h-1ZM437 685.1h1V691.1h-1ZM438 685.2h1V688.1h-1ZM439 685.3h1V688.2h-1ZM440 685.3h1V688.2h-1ZM441 685.4h1V688.3h-1ZM442 685.5h1V688.4h-1ZM443 685.5h1V693.5h-1ZM444 685.6h1V690.1h-1ZM445 685.7h1V690.2h-1ZM446 685.7h1V688.6h-1ZM447 685.8h1V691.8h-1ZM448 685.9h1V689.4h-1ZM449 685.9h1V689.4h-1ZM450 686.0h1V690.5h-1ZM451 686.0h1V688.9h-1ZM452 686.0h1V692.0h-1ZM453 686.1h1V689.0h-1ZM454 686.1h1V693.1h-1ZM455 686.1h1V689.0h-1ZM456 686.1h1V689.0h-1ZM457 686.1h1V690.6h-1ZM458 686.2h1V690.7h-1ZM459 686.2h1V690.7h-1ZM460 686.2h1V690.7h-1ZM461 686.2h1V689.1h-1ZM462 686.2h1V690.7h-1ZM463 686.3h1V691.8h-1ZM464 686.3h1V689.2h-1ZM465 686.3h1V689.2h-1ZM466 686.3h1V689.2h-1ZM467 686.3h1V689.2h-1ZM468 686.4h1V689.3h-1ZM469 686.4h1V690.9h-1ZM470 686.4h1V690.9h-1ZM471 686.4h1V690.4h-1ZM472 686.4h1V691.9h-1ZM473 686.5h1V689.4h-1ZM474 686.5h1V689.4h-1ZM475 686.5h1V689.4h-1ZM476 686.5h1V689.4h-1ZM477 686.5h1V691.0h-1ZM478 686.6h1V691.1h-1ZM479 686.6h1V690.6h-1ZM480 686.6h1V689.5h-1ZM481 686.6h1V690.1h-1ZM482 686.6h1V689.5h-1ZM483 686.7h1V690.2h-1ZM484 686.7h1V691.2h-1ZM485 686.7h1V691.2h-1ZM486 686.7h1V690.7h-1ZM487 686.7h1V689.6h-1ZM488 686.8h1V693.8h-1ZM489 686.8h1V691.3h-1ZM490 686.8h1V689.7h-1ZM491 686.8h1V689.7h-1ZM492 686.8h1V690.8h-1ZM493 686.9h1V690.4h-1ZM494 686.9h1V692.4h-1ZM495 686.9h1V689.8h-1ZM496 686.9h1V689.8h-1ZM497 686.9h1V689.8h-1ZM498 687.0h1V689.9h-1ZM499 687.0h1V691.5h-1ZM500 687.0h1V690.5h-1ZM501 687.0h1V691.5h-1ZM502 687.1h1V690.0h-1ZM503 687.1h1V690.0h-1ZM504 687.2h1V691.2h-1ZM505 687.2h1V690.1h-1ZM506 687.3h1V692.8h-1ZM507 687.4h1V690.2h-1ZM508 687.4h1V691.9h-1ZM509 687.5h1V690.4h-1ZM510 687.5h1V690.4h-1ZM511 687.5h1V691.5h-1ZM512 687.6h1V690.5h-1ZM513 687.6h1V690.5h-1ZM514 687.7h1V691.2h-1ZM515 687.8h1V691.8h-1ZM516 687.8h1V692.3h-1ZM517 687.9h1V691.4h-1ZM518 687.9h1V691.4h-1ZM519 688.0h1V696.0h-1ZM520 688.0h1V690.9h-1ZM521 688.0h1V692.5h-1ZM522 688.1h1V691.0h-1ZM523 688.1h1V691.0h-1ZM524 688.1h1V691.0h-1ZM525 688.2h1V691.1h-1ZM526 688.2h1V691.1h-1ZM527 688.3h1V691.2h-1ZM528 688.3h1V691.2h-1ZM529 688.3h1V691.2h-1ZM530 688.4h1V695.4h-1ZM531 688.4h1V691.3h-1ZM532 688.5h1V694.5h-1ZM533 688.5h1V695.5h-1ZM534 688.5h1V691.4h-1ZM535 688.6h1V691.5h-1ZM536 688.6h1V691.5h-1ZM537 688.6h1V691.5h-1ZM538 688.7h1V694.2h-1ZM539 688.7h1V691.6h-1ZM540 688.8h1V694.2h-1ZM541 688.8h1V691.7h-1ZM542 688.8h1V691.7h-1ZM543 688.9h1V691.8h-1ZM544 688.9h1V691.8h-1ZM545 688.9h1V694.4h-1ZM546 689.0h1V691.9h-1ZM547 689.0h1V691.9h-1ZM548 689.0h1V694.5h-1ZM549 689.1h1V693.6h-1ZM550 689.1h1V692.0h-1ZM551 689.2h1V694.7h-1ZM552 689.2h1V693.7h-1ZM553 689.2h1V692.1h-1ZM554 689.3h1V692.2h-1ZM555 689.3h1V692.2h-1ZM556 689.4h1V693.9h-1ZM557 689.4h1V695.4h-1ZM558 689.4h1V697.4h-1ZM559 689.5h1V694.0h-1ZM560 689.5h1V695.0h-1ZM561 689.5h1V692.4h-1ZM562 689.5h1V692.4h-1ZM563 689.5h1V692.4h-1ZM564 689.5h1V694.0h-1ZM565 689.6h1V692.5h-1ZM566 689.6h1V695.1h-1ZM567 689.6h1V692.5h-1ZM568 689.6h1V693.6h-1ZM569 689.6h1V695.1h-1ZM570 689.6h1V695.6h-1ZM571 689.6h1V692.5h-1ZM572 689.6h1V692.5h-1ZM573 689.7h1V693.7h-1ZM574 689.7h1V694.2h-1ZM575 689.7h1V693.2h-1ZM576 689.7h1V694.2h-1ZM577 689.7h1V692.6h-1ZM578 689.7h1V692.6h-1ZM579 689.7h1V693.7h-1ZM580 689.8h1V692.6h-1ZM581 689.8h1V696.8h-1ZM582 689.8h1V697.8h-1ZM583 689.8h1V692.7h-1ZM584 689.8h1V692.7h-1ZM585 689.8h1V694.3h-1ZM586 689.8h1V694.3h-1ZM587 689.8h1V692.7h-1ZM588 689.9h1V696.9h-1ZM589 689.9h1V692.8h-1ZM590 689.9h1V695.4h-1ZM591 689.9h1V693.9h-1ZM592 689.9h1V697.9h-1ZM593 689.9h1V692.8h-1ZM594 689.9h1V692.8h-1ZM595 689.9h1V692.8h-1ZM596 690.0h1V692.9h-1ZM597 690.0h1V695.5h-1ZM598 690.0h1V695.5h-1ZM599 690.0h1V695.5h-1ZM600 690.0h1V695.5h-1ZM601 689.9h1V694.4h-1ZM602 689.9h1V694.4h-1ZM603 689.8h1V692.7h-1ZM604 689.8h1V694.3h-1ZM605 689.7h1V692.6h-1ZM606 689.6h1V694.1h-1ZM607 689.6h1V692.5h-1ZM608 689.5h1V694.0h-1ZM609 689.5h1V692.4h-1ZM610 689.4h1V692.3h-1ZM611 689.3h1V695.3h-1ZM612 689.3h1V692.2h-1ZM613 689.2h1V693.7h-1ZM614 689.2h1V697.2h-1ZM615 689.1h1V692.0h-1ZM616 689.0h1V696.0h-1ZM617 689.0h1V691.9h-1ZM618 688.9h1V694.4h-1ZM619 688.9h1V694.4h-1ZM620 688.8h1V696.8h-1ZM621 688.7h1V692.2h-1ZM622 688.7h1V693.2h-1ZM623 688.6h1V696.6h-1ZM624 688.6h1V696.6h-1ZM625 688.5h1V691.4h-1ZM626 688.4h1V693.9h-1ZM627 688.3h1V691.2h-1ZM628 688.2h1V691.1h-1ZM629 688.1h1V691.0h-1ZM630 688.0h1V695.0h-1ZM631 687.9h1V691.4h-1ZM632 687.8h1V694.8h-1ZM633 687.7h1V691.2h-1ZM634 687.6h1V690.5h-1ZM635 687.5h1V690.4h-1ZM636 687.4h1V693.4h-1ZM637 687.3h1V690.2h-1ZM638 687.2h1V691.7h-1ZM639 687.1h1V690.0h-1ZM640 687.0h1V689.9h-1ZM641 686.9h1V690.9h-1ZM642 686.8h1V689.7h-1ZM643 686.7h1V689.6h-1ZM644 686.6h1V691.1h-1ZM645 686.5h1V690.5h-1ZM646 686.5h1V689.4h-1ZM647 686.5h1V690.5h-1ZM648 686.5h1V689.4h-1ZM649 686.6h1V689.5h-1ZM650 686.6h1V691.1h-1ZM651 686.6h1V689.5h-1ZM652 686.6h1V691.1h-1ZM653 686.6h1V689.5h-1ZM654 686.6h1V689.5h-1ZM655 686.6h1V691.1h-1ZM656 686.7h1V690.2h-1ZM657 686.7h1V692.2h-1ZM658 686.7h1V691.2h-1ZM659 686.7h1V691.2h-1ZM660 686.7h1V691.2h-1ZM661 686.7h1V689.6h-1ZM662 686.7h1V689.6h-1ZM663 686.8h1V692.8h-1ZM664 686.8h1V690.8h-1ZM665 686.8h1V689.7h-1ZM666 686.8h1V689.7h-1ZM667 686.8h1V689.7h-1ZM668 686.8h1V690.8h-1ZM669 686.8h1V690.8h-1ZM670 686.9h1V689.8h-1ZM671 686.9h1V693.9h-1ZM672 686.9h1V689.8h-1ZM673 686.9h1V689.8h-1ZM674 686.9h1V691.4h-1ZM675 686.9h1V692.4h-1ZM676 686.9h1V689.8h-1ZM677 687.0h1V689.9h-1ZM678 687.0h1V690.5h-1ZM679 687.0h1V695.0h-1ZM680 687.0h1V689.9h-1ZM681 687.0h1V691.0h-1ZM682 687.0h1V689.9h-1ZM683 687.1h1V691.1h-1ZM684 687.1h1V690.0h-1ZM685 687.1h1V690.0h-1ZM686 687.1h1V690.0h-1ZM687 687.1h1V690.0h-1ZM688 687.2h1V693.2h-1ZM689 687.2h1V691.7h-1ZM690 687.2h1V690.1h-1ZM691 687.2h1V691.2h-1ZM692 687.2h1V690.1h-1ZM693 687.3h1V692.8h-1ZM694 687.3h1V690.2h-1ZM695 687.3h1V692.8h-1ZM696 687.3h1V690.2h-1ZM697 687.3h1V691.3h-1ZM698 687.4h1V690.3h-1ZM699 687.4h1V690.3h-1ZM700 687.4h1V691.4h-1ZM701 687.4h1V690.3h-1ZM702 687.4h1V691.4h-1ZM703 687.5h1V690.4h-1ZM704 687.5h1V690.4h-1ZM705 687.5h1V691.0h-1ZM706 687.5h1V690.4h-1ZM707 687.5h1V695.5h-1ZM708 687.6h1V690.5h-1ZM709 687.6h1V690.5h-1ZM710 687.6h1V694.6h-1ZM711 687.6h1V691.1h-1ZM712 687.6h1V690.5h-1ZM713 687.7h1V691.7h-1ZM714 687.7h1V690.6h-1ZM715 687.7h1V691.7h-1ZM716 687.7h1V690.6h-1ZM717 687.7h1V690.6h-1ZM718 687.8h1V690.7h-1ZM719 687.8h1V690.7h-1ZM720 687.8h1V692.3h-1ZM721 687.8h1V691.8h-1ZM722 687.8h1V691.8h-1ZM723 687.9h1V693.9h-1ZM724 687.9h1V691.9h-1ZM725 687.9h1V690.8h-1ZM726 687.9h1V693.4h-1ZM727 687.9h1V690.8h-1ZM728 688.0h1V692.0h-1ZM729 688.0h1V690.9h-1ZM730 688.0h1V696.0h-1ZM731 688.0h1V694.0h-1ZM732 688.0h1V690.9h-1ZM733 688.0h1V692.0h-1ZM734 688.0h1V690.9h-1ZM735 688.0h1V690.9h-1ZM736 688.0h1V690.9h-1ZM737 688.1h1V692.6h-1ZM738 688.1h1V692.6h-1ZM739 688.1h1V691.0h-1ZM740 688.1h1V691.0h-1ZM741 688.1h1V692.6h-1ZM742 688.1h1V691.0h-1ZM743 688.1h1V691.0h-1ZM744 688.1h1V691.0h-1ZM745 688.1h1V692.1h-1ZM746 688.1h1V691.0h-1ZM747 688.1h1V691.0h-1ZM748 688.1h1V691.0h-1ZM749 688.1h1V691.0h-1ZM750 688.2h1V691.1h-1ZM751 688.2h1V693.7h-1ZM752 688.2h1V691.1h-1ZM753 688.2h1V691.1h-1ZM754 688.2h1V692.2h-1ZM755 688.2h1V691.1h-1ZM756 688.2h1V692.7h-1ZM757 688.2h1V695.2h-1ZM758 688.2h1V692.7h-1ZM759 688.2h1V692.7h-1ZM760 688.2h1V691.1h-1ZM761 688.2h1V691.1h-1ZM762 688.2h1V691.1h-1ZM763 688.3h1V691.2h-1ZM764 688.3h1V692.3h-1ZM765 688.3h1V691.2h-1ZM766 688.3h1V691.2h-1ZM767 688.3h1V693.8h-1ZM768 688.3h1V691.2h-1ZM769 688.3h1V696.3h-1ZM770 688.3h1V693.8h-1ZM771 688.3h1V691.2h-1ZM772 688.3h1V692.3h-1ZM773 688.3h1V696.3h-1ZM774 688.3h1V691.2h-1ZM775 688.3h1V692.8h-1ZM776 688.4h1V692.9h-1ZM777 688.4h1V692.4h-1ZM778 688.4h1V692.9h-1ZM779 688.4h1V693.9h-1ZM780 688.4h1V692.9h-1ZM781 688.4h1V693.9h-1ZM782 688.4h1V691.3h-1ZM783 688.4h1V691.3h-1ZM784 688.4h1V694.4h-1ZM785 688.4h1V693.9h-1ZM786 688.4h1V692.4h-1ZM787 688.4h1V691.3h-1ZM788 688.4h1V691.3h-1ZM789 688.5h1V691.4h-1ZM790 688.5h1V692.0h-1ZM791 688.5h1V692.0h-1ZM792 688.5h1V691.4h-1ZM793 688.5h1V691.4h-1ZM794 688.5h1V691.4h-1ZM795 688.5h1V691.4h-1ZM796 688.5h1V692.5h-1ZM797 688.5h1V693.0h-1ZM798 688.5h1V691.4h-1ZM799 688.5h1V696.5h-1ZM800 688.5h1V691.4h-1ZM801 688.5h1V692.0h-1ZM802 688.6h1V694.1h-1ZM803 688.6h1V692.6h-1ZM804 688.6h1V691.5h-1ZM805 688.6h1V691.5h-1ZM806 688.6h1V691.5h-1ZM807 688.6h1V692.6h-1ZM808 688.6h1V693.1h-1ZM809 688.6h1V691.5h-1ZM810 688.6h1V694.1h-1ZM811 688.6h1V691.5h-1ZM812 688.6h1V693.1h-1ZM813 688.6h1V693.1h-1ZM814 688.6h1V691.5h-1ZM815 688.7h1V693.2h-1ZM816 688.7h1V691.6h-1ZM817 688.7h1V695.7h-1ZM818 688.7h1V692.7h-1ZM819 688.7h1V694.2h-1ZM820 688.7h1V691.6h-1ZM821 688.7h1V693.2h-1ZM822 688.7h1V691.6h-1ZM823 688.7h1V692.7h-1ZM824 688.7h1V691.6h-1ZM825 688.7h1V691.6h-1ZM826 688.7h1V692.2h-1ZM827 688.7h1V691.6h-1ZM828 688.8h1V691.7h-1ZM829 688.8h1V691.7h-1ZM830 688.8h1V691.7h-1ZM831 688.8h1V691.7h-1ZM832 688.8h1V691.7h-1ZM833 688.8h1V691.7h-1ZM834 688.8h1V692.3h-1ZM835 688.8h1V691.7h-1ZM836 688.8h1V691.7h-1ZM837 688.8h1V693.3h-1ZM838 688.8h1V691.7h-1ZM839 688.8h1V691.7h-1ZM840 688.8h1V691.7h-1ZM841 688.9h1V691.8h-1ZM842 688.9h1V691.8h-1ZM843 688.9h1V693.4h-1ZM844 688.9h1V691.8h-1ZM845 688.9h1V691.8h-1ZM846 688.9h1V691.8h-1ZM847 688.9h1V691.8h-1ZM848 688.9h1V691.8h-1ZM849 688.9h1V696.9h-1ZM850 688.9h1V691.8h-1ZM851 688.9h1V691.8h-1ZM852 688.9h1V694.4h-1ZM853 688.9h1V691.8h-1ZM854 689.0h1V691.9h-1ZM855 689.0h1V693.5h-1ZM856 689.0h1V691.9h-1ZM857 689.0h1V691.9h-1ZM858 689.0h1V694.5h-1ZM859 689.0h1V691.9h-1ZM860 689.0h1V693.5h-1ZM861 689.0h1V691.9h-1ZM862 688.9h1V691.8h-1ZM863 688.9h1V691.8h-1ZM864 688.8h1V693.3h-1ZM865 688.8h1V691.7h-1ZM866 688.7h1V691.6h-1ZM867 688.7h1V691.6h-1ZM868 688.6h1V691.5h-1ZM869 688.6h1V694.6h-1ZM870 688.5h1V693.0h-1ZM871 688.5h1V691.4h-1ZM872 688.4h1V691.3h-1ZM873 688.4h1V695.4h-1ZM874 688.3h1V692.8h-1ZM875 688.3h1V691.2h-1ZM876 688.2h1V691.1h-1ZM877 688.2h1V691.1h-1ZM878 688.1h1V691.0h-1ZM879 688.1h1V695.1h-1ZM880 688.0h1V690.9h-1ZM881 688.0h1V692.0h-1Z" fill="#f812f8" stroke="none"/>
<rect x="1055.5" y="80.5" width="136" height="656.8" fill="none" stroke="#c4c4c4" stroke-width="1"/>
<text x="1062" y="89.5" font-family="Liberation Sans" font-size="10.5" font-weight="normal" fill="#22227a" stroke="#22227a" stroke-width="0.35" text-anchor="start" textLength="82" lengthAdjust="spacingAndGlyphs">Transponder (A0) [BS]</text>
<text transform="translate(1062,116.30) scale(0.8,1)" font-family="Liberation Sans" font-size="10" fill="#262626" stroke="#262626" stroke-width="0.38">Frequency:</text>
<text transform="translate(1121,116.30) scale(0.83,1)" font-family="Liberation Sans" font-size="10" font-weight="bold" fill="#0a6c0a" stroke="#0a6c0a" stroke-width="0.15">10889,749 MHz</text>
<text transform="translate(1062,150.04) scale(0.8,1)" font-family="Liberation Sans" font-size="10" fill="#262626" stroke="#262626" stroke-width="0.38">Polarization:</text>
<text transform="translate(1121,150.04) scale(0.83,1)" font-family="Liberation Sans" font-size="10" font-weight="bold" fill="#0a6c0a" stroke="#0a6c0a" stroke-width="0.15">Vertical</text>
<text transform="translate(1062,183.78) scale(0.8,1)" font-family="Liberation Sans" font-size="10" fill="#262626" stroke="#262626" stroke-width="0.38">Symbol Rate:</text>
<text transform="translate(1121,183.78) scale(0.83,1)" font-family="Liberation Sans" font-size="10" font-weight="bold" fill="#0a6c0a" stroke="#0a6c0a" stroke-width="0.15">27497,547 KS/s</text>
<text transform="translate(1062,217.52) scale(0.8,1)" font-family="Liberation Sans" font-size="10" fill="#262626" stroke="#262626" stroke-width="0.38">Standard:</text>
<text transform="translate(1121,217.52) scale(0.83,1)" font-family="Liberation Sans" font-size="10" font-weight="bold" fill="#0a6c0a" stroke="#0a6c0a" stroke-width="0.15">DVB-S</text>
<text transform="translate(1062,251.26) scale(0.8,1)" font-family="Liberation Sans" font-size="10" fill="#262626" stroke="#262626" stroke-width="0.38">Modulation:</text>
<text transform="translate(1121,251.26) scale(0.83,1)" font-family="Liberation Sans" font-size="10" font-weight="bold" fill="#0a6c0a" stroke="#0a6c0a" stroke-width="0.15">QPSK</text>
<text transform="translate(1062,285.00) scale(0.8,1)" font-family="Liberation Sans" font-size="10" fill="#262626" stroke="#262626" stroke-width="0.38">FEC:</text>
<text transform="translate(1121,285.00) scale(0.83,1)" font-family="Liberation Sans" font-size="10" font-weight="bold" fill="#0a6c0a" stroke="#0a6c0a" stroke-width="0.15">5/6</text>
<text transform="translate(1062,318.74) scale(0.8,1)" font-family="Liberation Sans" font-size="10" fill="#262626" stroke="#262626" stroke-width="0.38">RollOff:</text>
<text transform="translate(1121,318.74) scale(0.83,1)" font-family="Liberation Sans" font-size="10" font-weight="bold" fill="#0a6c0a" stroke="#0a6c0a" stroke-width="0.15">0.35</text>
<text transform="translate(1062,352.48) scale(0.8,1)" font-family="Liberation Sans" font-size="10" fill="#262626" stroke="#262626" stroke-width="0.38">Pilot:</text>
<text transform="translate(1121,352.48) scale(0.8,1)" font-family="Liberation Sans" font-size="10" fill="#262626" stroke="#262626" stroke-width="0.38">OFF</text>
<text transform="translate(1062,386.22) scale(0.8,1)" font-family="Liberation Sans" font-size="10" fill="#262626" stroke="#262626" stroke-width="0.38">Spectrum:</text>
<text transform="translate(1121,386.22) scale(0.83,1)" font-family="Liberation Sans" font-size="10" font-weight="bold" fill="#0a6c0a" stroke="#0a6c0a" stroke-width="0.15">Inverted</text>
<text transform="translate(1062,419.96) scale(0.8,1)" font-family="Liberation Sans" font-size="10" fill="#262626" stroke="#262626" stroke-width="0.38">Frame Type:</text>
<text transform="translate(1121,419.96) scale(0.8,1)" font-family="Liberation Sans" font-size="10" fill="#262626" stroke="#262626" stroke-width="0.38">Long Frame</text>
<text transform="translate(1062,453.70) scale(0.8,1)" font-family="Liberation Sans" font-size="10" fill="#262626" stroke="#262626" stroke-width="0.38">Code Mode:</text>
<text transform="translate(1121,453.70) scale(0.8,1)" font-family="Liberation Sans" font-size="10" fill="#262626" stroke="#262626" stroke-width="0.38">CCM</text>
<text transform="translate(1062,487.44) scale(0.8,1)" font-family="Liberation Sans" font-size="10" fill="#262626" stroke="#262626" stroke-width="0.38">Stream type:</text>
<text transform="translate(1121,487.44) scale(0.8,1)" font-family="Liberation Sans" font-size="10" fill="#262626" stroke="#262626" stroke-width="0.38">Transport</text>
<text transform="translate(1062,521.18) scale(0.8,1)" font-family="Liberation Sans" font-size="10" fill="#262626" stroke="#262626" stroke-width="0.38">ISSYI</text>
<text transform="translate(1121,521.18) scale(0.8,1)" font-family="Liberation Sans" font-size="10" fill="#262626" stroke="#262626" stroke-width="0.38">OFF</text>
<text transform="translate(1062,554.92) scale(0.8,1)" font-family="Liberation Sans" font-size="10" fill="#262626" stroke="#262626" stroke-width="0.38">NPD:</text>
<text transform="translate(1121,554.92) scale(0.8,1)" font-family="Liberation Sans" font-size="10" fill="#262626" stroke="#262626" stroke-width="0.38">OFF</text>
<text transform="translate(1062,588.66) scale(0.8,1)" font-family="Liberation Sans" font-size="10" fill="#262626" stroke="#262626" stroke-width="0.38">RF Level:</text>
<text transform="translate(1121,588.66) scale(0.83,1)" font-family="Liberation Sans" font-size="10" font-weight="bold" fill="#0a6c0a" stroke="#0a6c0a" stroke-width="0.15">-44 dBm</text>
<text transform="translate(1062,622.40) scale(0.8,1)" font-family="Liberation Sans" font-size="10" fill="#262626" stroke="#262626" stroke-width="0.38">BitRate:</text>
<text transform="translate(1121,622.40) scale(0.83,1)" font-family="Liberation Sans" font-size="10" font-weight="bold" fill="#0a6c0a" stroke="#0a6c0a" stroke-width="0.15">45,817 Mbit/s</text>
<text transform="translate(1062,656.14) scale(0.8,1)" font-family="Liberation Sans" font-size="10" fill="#262626" stroke="#262626" stroke-width="0.38">CarrierWidth:</text>
<text transform="translate(1121,656.14) scale(0.83,1)" font-family="Liberation Sans" font-size="10" font-weight="bold" fill="#0a6c0a" stroke="#0a6c0a" stroke-width="0.15">37,120 MHz</text>
<text transform="translate(1062,705) scale(0.78,1)" font-family="Liberation Sans" font-size="10" fill="#262626" stroke="#262626" stroke-width="0.38">MIS (0):</text>
<rect x="1122" y="692" width="55" height="17.5" fill="#f7f7f7"/>
<text transform="translate(1124.2,705.3) scale(0.8,1)" font-family="Liberation Sans" font-size="10.5" fill="#262626" stroke="#262626" stroke-width="0.35">Single</text>
<path d="M1167.5 699 L1171 702.5 L1174.5 699" stroke="#7a7a7a" stroke-width="1" fill="none"/>
<rect x="1056.5" y="746.5" width="134" height="22.5" rx="3" fill="#fbfbfb" stroke="#bcbcbc"/>
<rect x="1117.5" y="750.5" width="12" height="13.5" rx="1.5" fill="#ececec" stroke="#707070" stroke-width="1"/>
<rect x="1118.2" y="754.2" width="10.6" height="2.6" fill="#1f66c8"/>
<line x1="1118" y1="759.2" x2="1129" y2="759.2" stroke="#9a9a9a" stroke-width="1"/>
<line x1="1118" y1="761.6" x2="1129" y2="761.6" stroke="#b0b0b0" stroke-width="1"/>
<rect x="8.5" y="779.8" width="93.5" height="17.0" rx="2" fill="url(#gGray)" stroke="#a6a6a6" stroke-width="1"/>
<rect x="9" y="780.3" width="92.5" height="16.0" fill="url(#gGreen)"/>
<rect x="106.5" y="779.8" width="490" height="17.0" rx="2" fill="url(#gGray)" stroke="#a6a6a6" stroke-width="1"/>
<rect x="107" y="780.3" width="49" height="16.0" fill="url(#gPink)"/>
<rect x="157" y="780.3" width="156.5" height="16.0" fill="url(#gYel)"/>
<rect x="601.5" y="779.8" width="242.39999999999998" height="17.0" rx="2" fill="url(#gGray)" stroke="#a6a6a6" stroke-width="1"/>
<rect x="602" y="780.3" width="51" height="16.0" fill="url(#gPink)"/>
<rect x="654" y="780.3" width="18" height="16.0" fill="url(#gYel)"/>
<rect x="848.5" y="779.8" width="243" height="17.0" rx="2" fill="url(#gGray)" stroke="#a6a6a6" stroke-width="1"/>
<rect x="849" y="780.3" width="51.700000000000045" height="16.0" fill="url(#gPink)"/>
<rect x="901.7" y="780.3" width="52.299999999999955" height="16.0" fill="url(#gYel)"/>
<rect x="1096.5" y="779.8" width="93" height="17.0" rx="2" fill="url(#gGray)" stroke="#a6a6a6" stroke-width="1"/>
<rect x="1097" y="780.3" width="92" height="16.0" fill="url(#gGreen)"/>
<rect x="8.5" y="802.3" width="93.5" height="16.800000000000068" rx="2" fill="url(#gGray)" stroke="#a6a6a6" stroke-width="1"/>
<rect x="9" y="802.8" width="92.5" height="15.800000000000068" fill="url(#gGreen)"/>
<rect x="106.5" y="802.3" width="490" height="16.800000000000068" rx="2" fill="url(#gGray)" stroke="#a6a6a6" stroke-width="1"/>
<rect x="107" y="802.8" width="49" height="15.800000000000068" fill="url(#gPink)"/>
<rect x="157" y="802.8" width="195" height="15.800000000000068" fill="url(#gYel)"/>
<rect x="352" y="802.8" width="50" height="15.800000000000068" fill="url(#gGreen)"/>
<rect x="601.5" y="802.3" width="490" height="16.800000000000068" rx="2" fill="url(#gGray)" stroke="#a6a6a6" stroke-width="1"/>
<rect x="602" y="802.8" width="159" height="15.800000000000068" fill="url(#gPink)"/>
<rect x="762" y="802.8" width="49.700000000000045" height="15.800000000000068" fill="url(#gYel)"/>
<rect x="1096.5" y="802.3" width="93" height="16.800000000000068" rx="2" fill="url(#gGray)" stroke="#a6a6a6" stroke-width="1"/>
<rect x="1097" y="802.8" width="92" height="15.800000000000068" fill="url(#gGreen)"/>
<text x="10" y="792.8" font-family="Liberation Sans" font-size="10.5" font-weight="normal" fill="#0a0a0a" stroke="#0a0a0a" stroke-width="0.55" text-anchor="start" textLength="27.8" lengthAdjust="spacingAndGlyphs">Present</text>
<text x="10" y="815" font-family="Liberation Sans" font-size="10.5" font-weight="normal" fill="#0a0a0a" stroke="#0a0a0a" stroke-width="0.55" text-anchor="start" textLength="17" lengthAdjust="spacingAndGlyphs">Lock</text>
<text x="110" y="792.8" font-family="Liberation Sans" font-size="10.5" font-weight="normal" fill="#0a0a0a" stroke="#0a0a0a" stroke-width="0.55" text-anchor="start" textLength="40" lengthAdjust="spacingAndGlyphs">Level: 42%</text>
<text x="110" y="815" font-family="Liberation Sans" font-size="10.5" font-weight="normal" fill="#0a0a0a" stroke="#0a0a0a" stroke-width="0.55" text-anchor="start" textLength="46.8" lengthAdjust="spacingAndGlyphs">Quality: 60%</text>
<text x="603" y="792.8" font-family="Liberation Sans" font-size="10.5" font-weight="normal" fill="#0a0a0a" stroke="#0a0a0a" stroke-width="0.55" text-anchor="start" textLength="54" lengthAdjust="spacingAndGlyphs">preBER: 4,1E-2</text>
<text x="605.3" y="815.5" font-family="Liberation Sans" font-size="10.5" font-weight="normal" fill="#0a0a0a" stroke="#0a0a0a" stroke-width="0.55" text-anchor="start" textLength="152" lengthAdjust="spacingAndGlyphs">SNR: 8,5 dB (Margin: 2,0 dB | Very Poor)</text>
<text x="850" y="792.8" font-family="Liberation Sans" font-size="10.5" font-weight="normal" fill="#0a0a0a" stroke="#0a0a0a" stroke-width="0.55" text-anchor="start" textLength="41.3" lengthAdjust="spacingAndGlyphs">BER: 1,5E-3</text>
<text x="1097.6" y="792.8" font-family="Liberation Sans" font-size="10.5" font-weight="normal" fill="#0a0a0a" stroke="#0a0a0a" stroke-width="0.55" text-anchor="start" textLength="78.4" lengthAdjust="spacingAndGlyphs">Input (~40,34 Mbps)</text>
<text x="1097.6" y="815" font-family="Liberation Sans" font-size="10.5" font-weight="normal" fill="#0a0a0a" stroke="#0a0a0a" stroke-width="0.55" text-anchor="start" textLength="29" lengthAdjust="spacingAndGlyphs">Sync TS</text>
<line x1="0" y1="826.3" x2="1198" y2="826.3" stroke="#c6c6c6" stroke-width="1.2"/>
<line x1="392.5" y1="829" x2="392.5" y2="846" stroke="#7c7c7c" stroke-width="0.9"/>
<line x1="790" y1="829" x2="790" y2="846" stroke="#7c7c7c" stroke-width="0.9"/>
<line x1="1185.4" y1="829" x2="1185.4" y2="846" stroke="#7c7c7c" stroke-width="0.9"/>
<text x="141.3" y="842" font-family="Liberation Sans" font-size="11" font-weight="normal" fill="#0a0a0a" stroke="#0a0a0a" stroke-width="0.55" text-anchor="start" textLength="112" lengthAdjust="spacingAndGlyphs">Locked -&gt; Uptime: 80:02:57</text>
<text x="535.8" y="842" font-family="Liberation Sans" font-size="11" font-weight="normal" fill="#0a0a0a" stroke="#0a0a0a" stroke-width="0.55" text-anchor="start" textLength="112.8" lengthAdjust="spacingAndGlyphs">SYNC 419 | TEI 3 | CC 24868</text>
<text x="913" y="842" font-family="Liberation Sans" font-size="11" font-weight="normal" fill="#0a0a0a" stroke="#0a0a0a" stroke-width="0.55" text-anchor="start" textLength="152.6" lengthAdjust="spacingAndGlyphs">Best signal: 8,5 dB (2024-11-27 20:11)</text>
<circle cx="1195.8" cy="838.3" r="0.9" fill="#555"/>
<circle cx="1192.7" cy="841.6" r="0.9" fill="#555"/>
<circle cx="1195.8" cy="841.6" r="0.9" fill="#555"/>
<circle cx="1189.6" cy="845" r="0.9" fill="#555"/>
<circle cx="1192.7" cy="845" r="0.9" fill="#555"/>
<circle cx="1195.8" cy="845" r="0.9" fill="#555"/>
<line x1="1197.5" y1="25" x2="1197.5" y2="848" stroke="#f2f2f2" stroke-width="1"/>
<rect x="1198.7" y="0" width="1.3" height="850" fill="#000000"/>
<rect x="0" y="847.6" width="1200" height="1" fill="#fafafa"/>
<rect x="0" y="848.6" width="1200" height="1.4" fill="#050505"/>
<path d="M0 842 Q0 847.6 5.5 847.6 H0 Z" fill="#050505"/><path d="M0.8 842 Q0.8 846.8 5.5 846.8" stroke="#fafafa" stroke-width="1" fill="none"/><path d="M1200 842 Q1200 847.6 1194.5 847.6 H1200 Z" fill="#050505"/>
<g>
<path d="M492 -10 H1215 V95 H504 Q492 95 492 85 Z" fill="#000" fill-opacity="0.72" filter="url(#fShadow)" transform="translate(0,12)"/>
<path d="M492.5 0 H1200 V85 H498.5 Q492.5 85 492.5 79 Z" fill="#000"/>
<rect x="493.5" y="3" width="138.5" height="18" fill="#ff5000"/>
<rect x="493.5" y="23.3" width="138.5" height="22.6" fill="url(#gDate)"/>
<rect x="493.5" y="23.3" width="138.5" height="22.6" fill="url(#pStripe)"/>
<text x="495" y="16.8" font-family="Liberation Sans" font-size="15" font-weight="bold" fill="#000" font-style="italic" stroke="#000" stroke-width="0.3" text-anchor="start" textLength="136.6" lengthAdjust="spacingAndGlyphs">Berlin-Paris-Vienna-Roma</text>
<rect x="634" y="3" width="138" height="18" fill="#e60000"/>
<rect x="634" y="23.3" width="138" height="22.6" fill="url(#gDate)"/>
<rect x="634" y="23.3" width="138" height="22.6" fill="url(#pStripe)"/>
<text x="687" y="16.8" font-family="Liberation Sans" font-size="15" font-weight="bold" fill="#000" font-style="italic" stroke="#000" stroke-width="0.3" text-anchor="start" textLength="34.7" lengthAdjust="spacingAndGlyphs">Dubai</text>
<rect x="774" y="3" width="139.20000000000005" height="18" fill="#00b400"/>
<rect x="774" y="23.3" width="139.20000000000005" height="22.6" fill="url(#gDate)"/>
<rect x="774" y="23.3" width="139.20000000000005" height="22.6" fill="url(#pStripe)"/>
<text x="820.5" y="16.8" font-family="Liberation Sans" font-size="15" font-weight="bold" fill="#000" font-style="italic" stroke="#000" stroke-width="0.3" text-anchor="start" textLength="48.8" lengthAdjust="spacingAndGlyphs">Moscow</text>
<rect x="915" y="3" width="139" height="18" fill="#0041bf"/>
<rect x="915" y="23.3" width="139" height="22.6" fill="url(#gDate)"/>
<rect x="915" y="23.3" width="139" height="22.6" fill="url(#pStripe)"/>
<text x="948.8" y="16.8" font-family="Liberation Sans" font-size="15" font-weight="bold" fill="#000" font-style="italic" stroke="#000" stroke-width="0.3" text-anchor="start" textLength="74.2" lengthAdjust="spacingAndGlyphs">London, Eng</text>
<rect x="1056" y="3" width="139" height="18" fill="#00c0b6"/>
<rect x="1056" y="23.3" width="139" height="22.6" fill="url(#gDate)"/>
<rect x="1056" y="23.3" width="139" height="22.6" fill="url(#pStripe)"/>
<text x="1074.6" y="16.8" font-family="Liberation Sans" font-size="15" font-weight="bold" fill="#000" font-style="italic" stroke="#000" stroke-width="0.3" text-anchor="start" textLength="105.3" lengthAdjust="spacingAndGlyphs">Rabat-Casablanca</text>
<text x="494.0" y="41.9" font-family="Liberation Sans" font-size="14" font-weight="bold" fill="#000" stroke="#000" stroke-width="0.5" text-anchor="start" textLength="65.5" lengthAdjust="spacingAndGlyphs">Wed, Nov 27</text>
<text x="583.6" y="41.9" font-family="Liberation Sans" font-size="14" font-weight="bold" fill="#000" stroke="#000" stroke-width="0.5" text-anchor="start" textLength="43" lengthAdjust="spacingAndGlyphs">20:12:12</text>
<text x="634.5" y="41.9" font-family="Liberation Sans" font-size="14" font-weight="bold" fill="#000" stroke="#000" stroke-width="0.5" text-anchor="start" textLength="65.5" lengthAdjust="spacingAndGlyphs">Wed, Nov 27</text>
<text x="732" y="41.9" font-family="Liberation Sans" font-size="14" font-weight="bold" fill="#000" stroke="#000" stroke-width="0.5" text-anchor="start" textLength="27" lengthAdjust="spacingAndGlyphs">23:12</text>
<text x="709.7" y="33.6" font-family="Liberation Sans" font-size="10" font-weight="bold" fill="#000" stroke="#000" stroke-width="0.2" text-anchor="start" textLength="9" lengthAdjust="spacingAndGlyphs">+3</text>
<text x="774.5" y="41.9" font-family="Liberation Sans" font-size="14" font-weight="bold" fill="#000" stroke="#000" stroke-width="0.5" text-anchor="start" textLength="65.5" lengthAdjust="spacingAndGlyphs">Wed, Nov 27</text>
<text x="873" y="41.9" font-family="Liberation Sans" font-size="14" font-weight="bold" fill="#000" stroke="#000" stroke-width="0.5" text-anchor="start" textLength="27" lengthAdjust="spacingAndGlyphs">22:12</text>
<text x="849.8" y="33.6" font-family="Liberation Sans" font-size="10" font-weight="bold" fill="#000" stroke="#000" stroke-width="0.2" text-anchor="start" textLength="9" lengthAdjust="spacingAndGlyphs">+2</text>
<text x="915.5" y="41.9" font-family="Liberation Sans" font-size="14" font-weight="bold" fill="#000" stroke="#000" stroke-width="0.5" text-anchor="start" textLength="65.5" lengthAdjust="spacingAndGlyphs">Wed, Nov 27</text>
<text x="1006.8" y="41.9" font-family="Liberation Sans" font-size="14" font-weight="bold" fill="#000" stroke="#000" stroke-width="0.5" text-anchor="start" textLength="43" lengthAdjust="spacingAndGlyphs">19:12:12</text>
<text x="993" y="33.6" font-family="Liberation Sans" font-size="10" font-weight="bold" fill="#000" stroke="#000" stroke-width="0.2" text-anchor="start" textLength="7" lengthAdjust="spacingAndGlyphs">-1</text>
<text x="1056.5" y="41.9" font-family="Liberation Sans" font-size="14" font-weight="bold" fill="#000" stroke="#000" stroke-width="0.5" text-anchor="start" textLength="65.5" lengthAdjust="spacingAndGlyphs">Wed, Nov 27</text>
<text x="1155" y="41.9" font-family="Liberation Sans" font-size="14" font-weight="bold" fill="#000" stroke="#000" stroke-width="0.5" text-anchor="start" textLength="27" lengthAdjust="spacingAndGlyphs">20:12</text>
<text x="499" y="66.7" font-family="Liberation Mono" font-size="15" font-weight="normal" fill="#bababa" text-anchor="start" textLength="680" lengthAdjust="spacingAndGlyphs">C:\Users\Roman Dávid&gt;Signal monitoring_PF 450_LC/SK_Amos 3-4°W_f0=10 890 MHz-V yes_24.11.2024+</text>
</g>
<rect x="573" y="80" width="54" height="53" fill="#ffffff"/>
<path d="M584.5 123.5 A24 24 0 1 1 616.5 123.5 Z" fill="none" stroke="#1c2a9a" stroke-width="1.4"/>
<path d="M613 89.5 L615 91.5 M624 109 L626 110.5" stroke="#fff" stroke-width="2.2"/><path d="M617.5 92.5 A24 24 0 0 1 624.2 108" stroke="#1c2a9a" stroke-width="2.2" fill="none"/>
<g stroke="#1c2a9a" fill="none" stroke-width="0.9"><path d="M592 87 L604 121 M594 86 L606 120 M592 87 Q588 104 594 110 L604 121 M588 110 a3 3 0 1 0 6 0 a3 3 0 1 0 -6 0 M586 123 Q592 116 596 113 M601 103 L609 102 L602 108"/></g>
<g stroke="#d81c1c" fill="none" stroke-width="1.6"><path d="M612 96 Q617 101 616 106 M615 93 Q620 99 619 107"/></g>
<text x="575" y="130.3" font-family="Liberation Serif" font-size="7.3" font-weight="bold" fill="#1c2a8a" stroke="#1c2a8a" stroke-width="0.45" textLength="51" lengthAdjust="spacingAndGlyphs"><tspan fill="#d01818" stroke="#d01818">DX</tspan>SATCS.COM</text>
</svg></body></html>
